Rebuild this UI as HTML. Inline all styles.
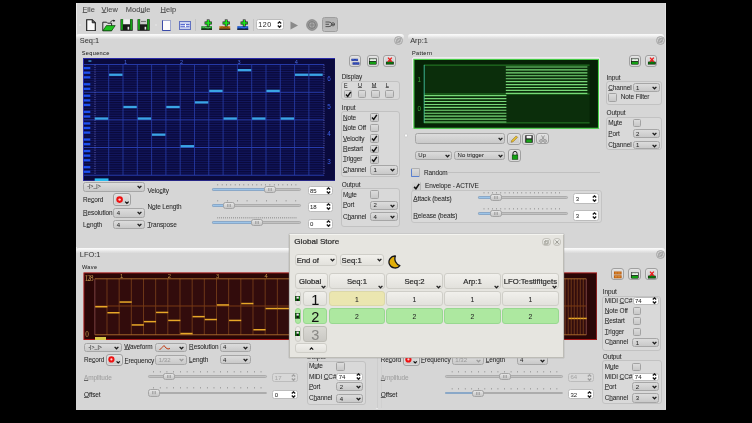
<!DOCTYPE html>
<html><head><meta charset="utf-8"><style>
html,body{margin:0;padding:0;width:752px;height:423px;overflow:hidden;background:#000;}
body{position:relative;will-change:transform;font-family:"Liberation Sans",sans-serif;}
div,span,svg{position:absolute;}
span{line-height:1;white-space:nowrap;}
u{text-decoration:underline;text-decoration-thickness:0.5px;text-underline-offset:0.45px;text-decoration-color:rgba(0,0,0,0.55);}
span{-webkit-text-stroke:0.04px currentColor;}
</style></head><body>
<div style="left:76px;top:3px;width:590px;height:406.6px;background:#d6d6d6;"></div>
<div style="left:76px;top:3px;width:1px;height:406px;background:#ececec;"></div>
<div style="left:76px;top:408.2px;width:590px;height:1.2px;background:#e8e8e8;"></div>
<div style="left:664.6px;top:3px;width:1px;height:406px;background:#e2e2e2;"></div>
<span style="left:82.6px;top:5.91px;font-size:7.4px;color:#4e4e4e;-webkit-text-stroke:0.1px #4e4e4e;letter-spacing:0.1px;"><u>F</u>ile</span>
<span style="left:101.6px;top:5.91px;font-size:7.4px;color:#4e4e4e;-webkit-text-stroke:0.1px #4e4e4e;letter-spacing:0.1px;"><u>V</u>iew</span>
<span style="left:125.7px;top:5.91px;font-size:7.4px;color:#4e4e4e;-webkit-text-stroke:0.1px #4e4e4e;letter-spacing:0.1px;">Mod<u>u</u>le</span>
<span style="left:160.5px;top:5.91px;font-size:7.4px;color:#4e4e4e;-webkit-text-stroke:0.1px #4e4e4e;letter-spacing:0.1px;"><u>H</u>elp</span>
<div style="left:76px;top:33.5px;width:327.5px;height:213px;background:linear-gradient(#fbfbfb 0px,#f2f2f2 1.8px,#e2e2e2 3.6px,#d6d6d6 5.5px);border-radius:3px 3px 0 0;box-sizing:border-box;"></div>
<span style="left:79.8px;top:36.61px;font-size:7.4px;color:#383838;">Seq:1</span>
<div style="left:394.0px;top:36.0px;width:9.0px;height:9.0px;border-radius:50%;background:radial-gradient(circle at 50% 40%,#dcdcdc,#c4c4c4);border:1px solid #a8a8a8;box-sizing:border-box;"></div>
<svg style="left:395.9px;top:37.9px" width="5.2" height="5.2"><rect x="0.6" y="1.8" width="2.8" height="2.8" fill="none" stroke="#9a9a9a" stroke-width="0.7"/><rect x="1.8" y="0.6" width="2.8" height="2.8" fill="none" stroke="#9a9a9a" stroke-width="0.7"/></svg>
<div style="left:408px;top:33.5px;width:256px;height:213px;background:linear-gradient(#fbfbfb 0px,#f2f2f2 1.8px,#e2e2e2 3.6px,#d6d6d6 5.5px);border-radius:3px 3px 0 0;box-sizing:border-box;"></div>
<span style="left:410.2px;top:36.61px;font-size:7.4px;color:#383838;">Arp:1</span>
<div style="left:656.0px;top:36.3px;width:9.0px;height:9.0px;border-radius:50%;background:radial-gradient(circle at 50% 40%,#dcdcdc,#c4c4c4);border:1px solid #a8a8a8;box-sizing:border-box;"></div>
<svg style="left:657.9px;top:38.2px" width="5.2" height="5.2"><rect x="0.6" y="1.8" width="2.8" height="2.8" fill="none" stroke="#9a9a9a" stroke-width="0.7"/><rect x="1.8" y="0.6" width="2.8" height="2.8" fill="none" stroke="#9a9a9a" stroke-width="0.7"/></svg>
<div style="left:76px;top:247.5px;width:300px;height:161px;background:linear-gradient(#fbfbfb 0px,#f2f2f2 1.8px,#e2e2e2 3.6px,#d6d6d6 5.5px);border-radius:3px 3px 0 0;box-sizing:border-box;"></div>
<span style="left:79.8px;top:250.61px;font-size:7.4px;color:#383838;">LFO:1</span>
<div style="left:378px;top:247.5px;width:287px;height:161px;background:linear-gradient(#fbfbfb 0px,#f2f2f2 1.8px,#e2e2e2 3.6px,#d6d6d6 5.5px);border-radius:3px 3px 0 0;box-sizing:border-box;"></div>
<span style="left:381.8px;top:250.61px;font-size:7.4px;color:#383838;">LFO:2</span>
<div style="left:655.8px;top:249.7px;width:9.0px;height:9.0px;border-radius:50%;background:radial-gradient(circle at 50% 40%,#dcdcdc,#c4c4c4);border:1px solid #a8a8a8;box-sizing:border-box;"></div>
<svg style="left:657.7px;top:251.6px" width="5.2" height="5.2"><rect x="0.6" y="1.8" width="2.8" height="2.8" fill="none" stroke="#9a9a9a" stroke-width="0.7"/><rect x="1.8" y="0.6" width="2.8" height="2.8" fill="none" stroke="#9a9a9a" stroke-width="0.7"/></svg>
<svg style="left:82.6px;top:57.8px" width="252.9" height="123.4" viewBox="82.6 57.8 252.9 123.4"><rect x="82.6" y="57.8" width="252.9" height="123.4" fill="#eef0f8"/><rect x="83.1" y="58.3" width="251.9" height="122.4" fill="#0a0a3c" stroke="#2a2aa8" stroke-width="1"/><line x1="83.5" x2="323.7" y1="64.4" y2="64.4" stroke="#2c44c0" stroke-width="0.9"/><line x1="83.5" x2="323.7" y1="66.7" y2="66.7" stroke="#1a2278" stroke-width="0.6"/><line x1="83.5" x2="323.7" y1="69.01" y2="69.01" stroke="#1a2278" stroke-width="0.6"/><line x1="83.5" x2="323.7" y1="71.31" y2="71.31" stroke="#1a2278" stroke-width="0.6"/><line x1="83.5" x2="323.7" y1="73.62" y2="73.62" stroke="#1a2278" stroke-width="0.6"/><line x1="83.5" x2="323.7" y1="75.92" y2="75.92" stroke="#1a2278" stroke-width="0.6"/><line x1="83.5" x2="323.7" y1="78.23" y2="78.23" stroke="#1a2278" stroke-width="0.6"/><line x1="83.5" x2="323.7" y1="80.53" y2="80.53" stroke="#1a2278" stroke-width="0.6"/><line x1="83.5" x2="323.7" y1="82.83" y2="82.83" stroke="#1a2278" stroke-width="0.6"/><line x1="83.5" x2="323.7" y1="85.14" y2="85.14" stroke="#1a2278" stroke-width="0.6"/><line x1="83.5" x2="323.7" y1="87.44" y2="87.44" stroke="#1a2278" stroke-width="0.6"/><line x1="83.5" x2="323.7" y1="89.75" y2="89.75" stroke="#1a2278" stroke-width="0.6"/><line x1="83.5" x2="323.7" y1="92.05" y2="92.05" stroke="#2c44c0" stroke-width="0.9"/><line x1="83.5" x2="323.7" y1="94.35" y2="94.35" stroke="#1a2278" stroke-width="0.6"/><line x1="83.5" x2="323.7" y1="96.66" y2="96.66" stroke="#1a2278" stroke-width="0.6"/><line x1="83.5" x2="323.7" y1="98.96" y2="98.96" stroke="#1a2278" stroke-width="0.6"/><line x1="83.5" x2="323.7" y1="101.27" y2="101.27" stroke="#1a2278" stroke-width="0.6"/><line x1="83.5" x2="323.7" y1="103.57" y2="103.57" stroke="#1a2278" stroke-width="0.6"/><line x1="83.5" x2="323.7" y1="105.88" y2="105.88" stroke="#1a2278" stroke-width="0.6"/><line x1="83.5" x2="323.7" y1="108.18" y2="108.18" stroke="#1a2278" stroke-width="0.6"/><line x1="83.5" x2="323.7" y1="110.48" y2="110.48" stroke="#1a2278" stroke-width="0.6"/><line x1="83.5" x2="323.7" y1="112.79" y2="112.79" stroke="#1a2278" stroke-width="0.6"/><line x1="83.5" x2="323.7" y1="115.09" y2="115.09" stroke="#1a2278" stroke-width="0.6"/><line x1="83.5" x2="323.7" y1="117.4" y2="117.4" stroke="#1a2278" stroke-width="0.6"/><line x1="83.5" x2="323.7" y1="119.7" y2="119.7" stroke="#2c44c0" stroke-width="0.9"/><line x1="83.5" x2="323.7" y1="122.0" y2="122.0" stroke="#1a2278" stroke-width="0.6"/><line x1="83.5" x2="323.7" y1="124.31" y2="124.31" stroke="#1a2278" stroke-width="0.6"/><line x1="83.5" x2="323.7" y1="126.61" y2="126.61" stroke="#1a2278" stroke-width="0.6"/><line x1="83.5" x2="323.7" y1="128.92" y2="128.92" stroke="#1a2278" stroke-width="0.6"/><line x1="83.5" x2="323.7" y1="131.22" y2="131.22" stroke="#1a2278" stroke-width="0.6"/><line x1="83.5" x2="323.7" y1="133.53" y2="133.53" stroke="#1a2278" stroke-width="0.6"/><line x1="83.5" x2="323.7" y1="135.83" y2="135.83" stroke="#1a2278" stroke-width="0.6"/><line x1="83.5" x2="323.7" y1="138.13" y2="138.13" stroke="#1a2278" stroke-width="0.6"/><line x1="83.5" x2="323.7" y1="140.44" y2="140.44" stroke="#1a2278" stroke-width="0.6"/><line x1="83.5" x2="323.7" y1="142.74" y2="142.74" stroke="#1a2278" stroke-width="0.6"/><line x1="83.5" x2="323.7" y1="145.05" y2="145.05" stroke="#1a2278" stroke-width="0.6"/><line x1="83.5" x2="323.7" y1="147.35" y2="147.35" stroke="#2c44c0" stroke-width="0.9"/><line x1="83.5" x2="323.7" y1="149.65" y2="149.65" stroke="#1a2278" stroke-width="0.6"/><line x1="83.5" x2="323.7" y1="151.96" y2="151.96" stroke="#1a2278" stroke-width="0.6"/><line x1="83.5" x2="323.7" y1="154.26" y2="154.26" stroke="#1a2278" stroke-width="0.6"/><line x1="83.5" x2="323.7" y1="156.57" y2="156.57" stroke="#1a2278" stroke-width="0.6"/><line x1="83.5" x2="323.7" y1="158.87" y2="158.87" stroke="#1a2278" stroke-width="0.6"/><line x1="83.5" x2="323.7" y1="161.18" y2="161.18" stroke="#1a2278" stroke-width="0.6"/><line x1="83.5" x2="323.7" y1="163.48" y2="163.48" stroke="#1a2278" stroke-width="0.6"/><line x1="83.5" x2="323.7" y1="165.78" y2="165.78" stroke="#1a2278" stroke-width="0.6"/><line x1="83.5" x2="323.7" y1="168.09" y2="168.09" stroke="#1a2278" stroke-width="0.6"/><line x1="83.5" x2="323.7" y1="170.39" y2="170.39" stroke="#1a2278" stroke-width="0.6"/><line x1="83.5" x2="323.7" y1="172.7" y2="172.7" stroke="#1a2278" stroke-width="0.6"/><line x1="83.5" x2="323.7" y1="175.0" y2="175.0" stroke="#2c44c0" stroke-width="0.9"/><rect x="83.3" y="66.8" width="6.6" height="2.2" fill="#1c50f0"/><rect x="83.3" y="71.41" width="6.6" height="2.2" fill="#1c50f0"/><rect x="83.3" y="76.02" width="6.6" height="2.2" fill="#1c50f0"/><rect x="83.3" y="82.93" width="6.6" height="2.2" fill="#1c50f0"/><rect x="83.3" y="87.54" width="6.6" height="2.2" fill="#1c50f0"/><rect x="83.3" y="94.45" width="6.6" height="2.2" fill="#1c50f0"/><rect x="83.3" y="99.06" width="6.6" height="2.2" fill="#1c50f0"/><rect x="83.3" y="103.67" width="6.6" height="2.2" fill="#1c50f0"/><rect x="83.3" y="110.58" width="6.6" height="2.2" fill="#1c50f0"/><rect x="83.3" y="115.19" width="6.6" height="2.2" fill="#1c50f0"/><rect x="83.3" y="122.1" width="6.6" height="2.2" fill="#1c50f0"/><rect x="83.3" y="126.71" width="6.6" height="2.2" fill="#1c50f0"/><rect x="83.3" y="131.32" width="6.6" height="2.2" fill="#1c50f0"/><rect x="83.3" y="138.23" width="6.6" height="2.2" fill="#1c50f0"/><rect x="83.3" y="142.84" width="6.6" height="2.2" fill="#1c50f0"/><rect x="83.3" y="149.75" width="6.6" height="2.2" fill="#1c50f0"/><rect x="83.3" y="154.36" width="6.6" height="2.2" fill="#1c50f0"/><rect x="83.3" y="158.97" width="6.6" height="2.2" fill="#1c50f0"/><rect x="83.3" y="165.88" width="6.6" height="2.2" fill="#1c50f0"/><rect x="83.3" y="170.49" width="6.6" height="2.2" fill="#1c50f0"/><line x1="108.3" x2="108.3" y1="64.4" y2="175.0" stroke="#2a40b0" stroke-width="0.75"/><line x1="122.6" x2="122.6" y1="64.4" y2="175.0" stroke="#2a40b0" stroke-width="0.75"/><line x1="136.9" x2="136.9" y1="64.4" y2="175.0" stroke="#2a40b0" stroke-width="0.75"/><line x1="151.2" x2="151.2" y1="64.4" y2="175.0" stroke="#2a40b0" stroke-width="0.75"/><line x1="165.5" x2="165.5" y1="64.4" y2="175.0" stroke="#2a40b0" stroke-width="0.75"/><line x1="179.8" x2="179.8" y1="64.4" y2="175.0" stroke="#2a40b0" stroke-width="0.75"/><line x1="194.1" x2="194.1" y1="64.4" y2="175.0" stroke="#2a40b0" stroke-width="0.75"/><line x1="208.4" x2="208.4" y1="64.4" y2="175.0" stroke="#2a40b0" stroke-width="0.75"/><line x1="222.7" x2="222.7" y1="64.4" y2="175.0" stroke="#2a40b0" stroke-width="0.75"/><line x1="237.0" x2="237.0" y1="64.4" y2="175.0" stroke="#2a40b0" stroke-width="0.75"/><line x1="251.3" x2="251.3" y1="64.4" y2="175.0" stroke="#2a40b0" stroke-width="0.75"/><line x1="265.6" x2="265.6" y1="64.4" y2="175.0" stroke="#2a40b0" stroke-width="0.75"/><line x1="279.9" x2="279.9" y1="64.4" y2="175.0" stroke="#2a40b0" stroke-width="0.75"/><line x1="294.2" x2="294.2" y1="64.4" y2="175.0" stroke="#2a40b0" stroke-width="0.75"/><line x1="308.5" x2="308.5" y1="64.4" y2="175.0" stroke="#2a40b0" stroke-width="0.75"/><line x1="94.6" x2="94.6" y1="64.4" y2="175.0" stroke="#7070c8" stroke-width="0.7" stroke-dasharray="1.2 1.1"/><line x1="323.6" x2="323.6" y1="64.4" y2="175.0" stroke="#7070c8" stroke-width="0.7" stroke-dasharray="1.2 1.1"/><rect x="94.4" y="117.2" width="13.4" height="2.3" fill="#3aa4e4"/><rect x="108.7" y="73.42" width="13.4" height="2.3" fill="#3aa4e4"/><rect x="123.0" y="105.67" width="13.4" height="2.3" fill="#3aa4e4"/><rect x="137.3" y="117.2" width="13.4" height="2.3" fill="#3aa4e4"/><rect x="151.6" y="133.33" width="13.4" height="2.3" fill="#3aa4e4"/><rect x="165.9" y="105.67" width="13.4" height="2.3" fill="#3aa4e4"/><rect x="180.2" y="144.85" width="13.4" height="2.3" fill="#3aa4e4"/><rect x="194.5" y="101.07" width="13.4" height="2.3" fill="#3aa4e4"/><rect x="208.8" y="89.55" width="13.4" height="2.3" fill="#3aa4e4"/><rect x="223.1" y="117.2" width="13.4" height="2.3" fill="#3aa4e4"/><rect x="237.4" y="68.81" width="13.4" height="2.3" fill="#3aa4e4"/><rect x="251.7" y="117.2" width="13.4" height="2.3" fill="#3aa4e4"/><rect x="266.0" y="89.55" width="13.4" height="2.3" fill="#3aa4e4"/><rect x="280.3" y="117.2" width="13.4" height="2.3" fill="#3aa4e4"/><rect x="294.6" y="73.42" width="13.4" height="2.3" fill="#3aa4e4"/><rect x="308.9" y="73.42" width="13.4" height="2.3" fill="#3aa4e4"/><rect x="88" y="60.2" width="3" height="1.3" fill="#40a8e8"/><text x="123.6" y="63.9" font-size="5.6" fill="#4a6ae0" font-family="Liberation Sans">1</text><text x="179.6" y="63.9" font-size="5.6" fill="#4a6ae0" font-family="Liberation Sans">2</text><text x="237.0" y="63.9" font-size="5.6" fill="#4a6ae0" font-family="Liberation Sans">3</text><text x="294.4" y="63.9" font-size="5.6" fill="#4a6ae0" font-family="Liberation Sans">4</text><text x="326.8" y="81.0" font-size="6.4" fill="#3c60e8" font-family="Liberation Sans">6</text><text x="326.8" y="108.7" font-size="6.4" fill="#3c60e8" font-family="Liberation Sans">5</text><text x="326.8" y="136.3" font-size="6.4" fill="#3c60e8" font-family="Liberation Sans">4</text><text x="326.8" y="163.6" font-size="6.4" fill="#3c60e8" font-family="Liberation Sans">3</text><rect x="94.3" y="178.2" width="13.8" height="2.9" fill="#28bcf0"/></svg>
<span style="left:81.7px;top:51.42px;font-size:5.6px;color:#262626;letter-spacing:0.35px;">Sequence</span>
<div style="left:404.6px;top:134.4px;width:2.4px;height:2.4px;border-radius:50%;background:#fafafa;box-shadow:0 0 0.8px #777;"></div>
<div style="left:348.9px;top:54.6px;width:12.3px;height:12px;box-sizing:border-box;border:1px solid #a0a0a0;border-radius:3px;background:linear-gradient(#e0e0e0,#cacaca);box-shadow:inset 0 0 0 0.5px #e8e8e8;"></div>
<svg style="left:350.7px;top:58.2px" width="9" height="7"><path d="M0.4 0.8 H7 V2.8 H0.4Z" fill="#0c1c90"/><path d="M1.6 4.4 H8.4 V6.6 H1.6Z" fill="#0c1c90"/><path d="M1 1.8 Q2 1 3 1.8 T5 1.8 T7 1.8 M2.2 5.5 Q3.2 4.7 4.2 5.5 T6.2 5.5 T8 5.5" fill="none" stroke="#5a8ae8" stroke-width="0.6"/></svg>
<div style="left:366.5px;top:54.6px;width:12.3px;height:12px;box-sizing:border-box;border:1px solid #a0a0a0;border-radius:3px;background:linear-gradient(#e0e0e0,#cacaca);box-shadow:inset 0 0 0 0.5px #e8e8e8;"></div>
<svg style="left:368.8px;top:57.8px" width="8" height="7"><rect x="0" y="0" width="7.6" height="6.6" rx="0.8" fill="#111"/><rect x="0.6" y="0.5" width="6.4" height="2.6" fill="#e8f0e8"/><path d="M1 1.2h1M2.6 1.2h1M4.2 1.2h1M5.8 1.2h0.8" stroke="#6a8a6a" stroke-width="0.5"/><rect x="0.6" y="3.8" width="6.4" height="2.4" fill="#12a012"/></svg>
<div style="left:383.3px;top:54.6px;width:12.3px;height:12px;box-sizing:border-box;border:1px solid #a0a0a0;border-radius:3px;background:linear-gradient(#e0e0e0,#cacaca);box-shadow:inset 0 0 0 0.5px #e8e8e8;"></div>
<svg style="left:385.6px;top:57.4px" width="8" height="8"><path d="M0 5 Q3.8 4 7.6 5 V7.2 H0Z" fill="#0a7a0a" stroke="#111" stroke-width="0.5"/><path d="M2 0.6 L5.8 4.8 M5.8 0.6 L2 4.8" stroke="#ee1818" stroke-width="1.3"/></svg>
<span style="left:341.7px;top:74.48px;font-size:6.45px;color:#262626;letter-spacing:-0.1px;">Display</span>
<div style="left:341.3px;top:81px;width:58.7px;height:18.5px;box-sizing:border-box;border:1px solid #c2c2c2;border-radius:3px;background:#d9d9d9;"></div>
<span style="left:344.0px;top:83.02px;font-size:5.6px;color:#262626;"><u>F</u></span>
<div style="left:343.6px;top:89.6px;width:8.5px;height:8.5px;box-sizing:border-box;border:1px solid #a2a2a2;border-radius:1.5px;background:linear-gradient(#dcdcdc,#c8c8c8);"></div>
<svg style="left:343.6px;top:89.6px" width="8.5" height="8.5" viewBox="0 0 8.5 8.5"><path d="M2 4.6 L3.7 6.4 L6.8 1.8" fill="none" stroke="#111" stroke-width="1.5"/></svg>
<span style="left:357.9px;top:83.02px;font-size:5.6px;color:#262626;"><u>U</u></span>
<div style="left:357.5px;top:89.6px;width:8.5px;height:8.5px;box-sizing:border-box;border:1px solid #a2a2a2;border-radius:1.5px;background:linear-gradient(#dcdcdc,#c8c8c8);"></div>
<span style="left:371.8px;top:83.02px;font-size:5.6px;color:#262626;"><u>M</u></span>
<div style="left:371.4px;top:89.6px;width:8.5px;height:8.5px;box-sizing:border-box;border:1px solid #a2a2a2;border-radius:1.5px;background:linear-gradient(#dcdcdc,#c8c8c8);"></div>
<span style="left:385.7px;top:83.02px;font-size:5.6px;color:#262626;"><u>L</u></span>
<div style="left:385.3px;top:89.6px;width:8.5px;height:8.5px;box-sizing:border-box;border:1px solid #a2a2a2;border-radius:1.5px;background:linear-gradient(#dcdcdc,#c8c8c8);"></div>
<span style="left:341.7px;top:104.98px;font-size:6.45px;color:#262626;letter-spacing:-0.1px;">Input</span>
<div style="left:341.3px;top:111.3px;width:58.7px;height:66px;box-sizing:border-box;border:1px solid #c2c2c2;border-radius:3px;background:#d9d9d9;"></div>
<span style="left:342.9px;top:114.88px;font-size:6.45px;color:#262626;letter-spacing:-0.1px;"><u>N</u>ote</span>
<div style="left:370.3px;top:113.4px;width:8.5px;height:8.5px;box-sizing:border-box;border:1px solid #a2a2a2;border-radius:1.5px;background:linear-gradient(#dcdcdc,#c8c8c8);"></div>
<svg style="left:370.3px;top:113.4px" width="8.5" height="8.5" viewBox="0 0 8.5 8.5"><path d="M2 4.6 L3.7 6.4 L6.8 1.8" fill="none" stroke="#111" stroke-width="1.5"/></svg>
<span style="left:342.9px;top:125.28px;font-size:6.45px;color:#262626;letter-spacing:-0.1px;"><u>N</u>ote Off</span>
<div style="left:370.3px;top:123.8px;width:8.5px;height:8.5px;box-sizing:border-box;border:1px solid #a2a2a2;border-radius:1.5px;background:linear-gradient(#dcdcdc,#c8c8c8);"></div>
<span style="left:342.9px;top:135.68px;font-size:6.45px;color:#262626;letter-spacing:-0.1px;"><u>V</u>elocity</span>
<div style="left:370.3px;top:134.2px;width:8.5px;height:8.5px;box-sizing:border-box;border:1px solid #a2a2a2;border-radius:1.5px;background:linear-gradient(#dcdcdc,#c8c8c8);"></div>
<svg style="left:370.3px;top:134.2px" width="8.5" height="8.5" viewBox="0 0 8.5 8.5"><path d="M2 4.6 L3.7 6.4 L6.8 1.8" fill="none" stroke="#111" stroke-width="1.5"/></svg>
<span style="left:342.9px;top:146.08px;font-size:6.45px;color:#262626;letter-spacing:-0.1px;"><u>R</u>estart</span>
<div style="left:370.3px;top:144.6px;width:8.5px;height:8.5px;box-sizing:border-box;border:1px solid #a2a2a2;border-radius:1.5px;background:linear-gradient(#dcdcdc,#c8c8c8);"></div>
<svg style="left:370.3px;top:144.6px" width="8.5" height="8.5" viewBox="0 0 8.5 8.5"><path d="M2 4.6 L3.7 6.4 L6.8 1.8" fill="none" stroke="#111" stroke-width="1.5"/></svg>
<span style="left:342.9px;top:156.48px;font-size:6.45px;color:#262626;letter-spacing:-0.1px;"><u>T</u>rigger</span>
<div style="left:370.3px;top:155.0px;width:8.5px;height:8.5px;box-sizing:border-box;border:1px solid #a2a2a2;border-radius:1.5px;background:linear-gradient(#dcdcdc,#c8c8c8);"></div>
<svg style="left:370.3px;top:155.0px" width="8.5" height="8.5" viewBox="0 0 8.5 8.5"><path d="M2 4.6 L3.7 6.4 L6.8 1.8" fill="none" stroke="#111" stroke-width="1.5"/></svg>
<span style="left:342.9px;top:167.48px;font-size:6.45px;color:#262626;letter-spacing:-0.1px;"><u>C</u>hannel</span>
<div style="left:370.2px;top:165.2px;width:27.4px;height:9.7px;box-sizing:border-box;border:1px solid #a6a6a6;border-radius:2.5px;background:linear-gradient(#dcdcdc,#c9c9c9);"></div>
<span style="left:373.6px;top:167.21px;font-size:6.0px;color:#262626;">1</span>
<svg style="left:389.8px;top:168.45px" width="5" height="4" viewBox="0 0 5 4"><path d="M0.6 0.9 L2.5 2.8 L4.4 0.9" fill="none" stroke="#1a1a1a" stroke-width="1.3"/></svg>
<span style="left:341.7px;top:181.68px;font-size:6.45px;color:#262626;letter-spacing:-0.1px;">Output</span>
<div style="left:341.3px;top:188px;width:58.7px;height:39px;box-sizing:border-box;border:1px solid #c2c2c2;border-radius:3px;background:#d9d9d9;"></div>
<span style="left:342.9px;top:191.68px;font-size:6.45px;color:#262626;letter-spacing:-0.1px;">M<u>u</u>te</span>
<div style="left:370.3px;top:190.2px;width:8.5px;height:8.5px;box-sizing:border-box;border:1px solid #a2a2a2;border-radius:1.5px;background:linear-gradient(#dcdcdc,#c8c8c8);"></div>
<span style="left:342.9px;top:202.48px;font-size:6.45px;color:#262626;letter-spacing:-0.1px;"><u>P</u>ort</span>
<div style="left:370.2px;top:200.6px;width:27.4px;height:9.3px;box-sizing:border-box;border:1px solid #a6a6a6;border-radius:2.5px;background:linear-gradient(#dcdcdc,#c9c9c9);"></div>
<span style="left:373.6px;top:202.41px;font-size:6.0px;color:#262626;">2</span>
<svg style="left:389.8px;top:203.65px" width="5" height="4" viewBox="0 0 5 4"><path d="M0.6 0.9 L2.5 2.8 L4.4 0.9" fill="none" stroke="#1a1a1a" stroke-width="1.3"/></svg>
<span style="left:342.9px;top:213.78px;font-size:6.45px;color:#262626;letter-spacing:-0.1px;">C<u>h</u>annel</span>
<div style="left:370.2px;top:212px;width:27.4px;height:9.4px;box-sizing:border-box;border:1px solid #a6a6a6;border-radius:2.5px;background:linear-gradient(#dcdcdc,#c9c9c9);"></div>
<span style="left:373.6px;top:213.86px;font-size:6.0px;color:#262626;">4</span>
<svg style="left:389.8px;top:215.1px" width="5" height="4" viewBox="0 0 5 4"><path d="M0.6 0.9 L2.5 2.8 L4.4 0.9" fill="none" stroke="#1a1a1a" stroke-width="1.3"/></svg>
<div style="left:83.3px;top:182.3px;width:61.4px;height:9.4px;box-sizing:border-box;border:1px solid #a6a6a6;border-radius:2.5px;background:linear-gradient(#dcdcdc,#c9c9c9);"></div>
<span style="left:87.3px;top:184.47px;font-size:5.2px;color:#262626;">-|&gt;_|&gt;</span>
<svg style="left:136.9px;top:185.4px" width="5" height="4" viewBox="0 0 5 4"><path d="M0.6 0.9 L2.5 2.8 L4.4 0.9" fill="none" stroke="#1a1a1a" stroke-width="1.3"/></svg>
<span style="left:147.4px;top:187.68px;font-size:6.45px;color:#262626;letter-spacing:-0.1px;">Velo<u>c</u>ity</span>
<span style="left:83px;top:197.48px;font-size:6.45px;color:#262626;letter-spacing:-0.1px;">Re<u>c</u>ord</span>
<div style="left:113.3px;top:193.3px;width:17.6px;height:12.9px;box-sizing:border-box;border:1px solid #a0a0a0;border-radius:3px;background:linear-gradient(#e0e0e0,#cacaca);box-shadow:inset 0 0 0 0.5px #e8e8e8;"></div>
<svg style="left:116.3px;top:195.8px" width="14" height="9"><circle cx="3.6" cy="3.6" r="3.3" fill="#ee1010"/><circle cx="3.6" cy="3.6" r="1.2" fill="#ffd0d0"/><path d="M9.2 5.6 L10.9 7.3 L12.6 5.6" fill="none" stroke="#111" stroke-width="1.2"/></svg>
<span style="left:147.4px;top:204.48px;font-size:6.45px;color:#262626;letter-spacing:-0.1px;">N<u>o</u>te Length</span>
<span style="left:83px;top:209.98px;font-size:6.45px;color:#262626;letter-spacing:-0.1px;"><u>R</u>esolution</span>
<div style="left:113.3px;top:208.2px;width:31.5px;height:9.4px;box-sizing:border-box;border:1px solid #a6a6a6;border-radius:2.5px;background:linear-gradient(#dcdcdc,#c9c9c9);"></div>
<span style="left:116.7px;top:210.06px;font-size:6.0px;color:#262626;">4</span>
<svg style="left:137.0px;top:211.3px" width="5" height="4" viewBox="0 0 5 4"><path d="M0.6 0.9 L2.5 2.8 L4.4 0.9" fill="none" stroke="#1a1a1a" stroke-width="1.3"/></svg>
<span style="left:83px;top:221.68px;font-size:6.45px;color:#262626;letter-spacing:-0.1px;">L<u>e</u>ngth</span>
<div style="left:113.3px;top:219.8px;width:31.5px;height:9.6px;box-sizing:border-box;border:1px solid #a6a6a6;border-radius:2.5px;background:linear-gradient(#dcdcdc,#c9c9c9);"></div>
<span style="left:116.7px;top:221.76px;font-size:6.0px;color:#262626;">4</span>
<svg style="left:137.0px;top:223.0px" width="5" height="4" viewBox="0 0 5 4"><path d="M0.6 0.9 L2.5 2.8 L4.4 0.9" fill="none" stroke="#1a1a1a" stroke-width="1.3"/></svg>
<span style="left:147.4px;top:221.68px;font-size:6.45px;color:#262626;letter-spacing:-0.1px;"><u>T</u>ranspose</span>
<div style="left:212.2px;top:187.8px;width:89.2px;height:2.8px;box-sizing:border-box;border:1px solid #acacac;border-radius:1.4px;background:#c2c2c2;"></div>
<div style="left:212.2px;top:187.8px;width:59.8px;height:2.8px;box-sizing:border-box;border:1px solid #8aa8c8;border-radius:1.4px;background:#9cc4e8;"></div>
<svg style="left:210.2px;top:183.6px" width="93.2" height="2"><rect x="7.5" y="0" width="0.6" height="1.5" fill="#808080"/><rect x="11.84" y="0" width="0.6" height="1.5" fill="#808080"/><rect x="16.18" y="0" width="0.6" height="1.5" fill="#808080"/><rect x="20.52" y="0" width="0.6" height="1.5" fill="#808080"/><rect x="24.86" y="0" width="0.6" height="1.5" fill="#808080"/><rect x="29.2" y="0" width="0.6" height="1.5" fill="#808080"/><rect x="33.54" y="0" width="0.6" height="1.5" fill="#808080"/><rect x="37.88" y="0" width="0.6" height="1.5" fill="#808080"/><rect x="42.22" y="0" width="0.6" height="1.5" fill="#808080"/><rect x="46.56" y="0" width="0.6" height="1.5" fill="#808080"/><rect x="50.9" y="0" width="0.6" height="1.5" fill="#808080"/><rect x="55.24" y="0" width="0.6" height="1.5" fill="#808080"/><rect x="59.58" y="0" width="0.6" height="1.5" fill="#808080"/><rect x="63.92" y="0" width="0.6" height="1.5" fill="#808080"/><rect x="68.26" y="0" width="0.6" height="1.5" fill="#808080"/><rect x="72.6" y="0" width="0.6" height="1.5" fill="#808080"/><rect x="76.94" y="0" width="0.6" height="1.5" fill="#808080"/><rect x="81.28" y="0" width="0.6" height="1.5" fill="#808080"/><rect x="85.62" y="0" width="0.6" height="1.5" fill="#808080"/></svg>
<div style="left:264px;top:185.6px;width:12px;height:7.2px;box-sizing:border-box;border:1px solid #a4a4a4;border-radius:2.5px;background:linear-gradient(#e4e4e4,#c6c6c6);"></div>
<svg style="left:268px;top:187.6px" width="4" height="3.2"><path d="M0.5 0V3.2M2 0V3.2M3.5 0V3.2" stroke="#8a8a8a" stroke-width="0.6"/></svg>
<div style="left:307.5px;top:185.5px;width:25.8px;height:9.8px;box-sizing:border-box;border:1px solid #bcbcbc;border-radius:2.5px;background:#ffffff;"></div>
<span style="left:309.9px;top:187.56px;font-size:6.0px;color:#2a2a2a;">85</span>
<svg style="left:326.3px;top:186.8px" width="5" height="7.2" viewBox="0 0 5 7.2"><path d="M0.8 2.6 L2.5 0.9 L4.2 2.6 M0.8 4.6 L2.5 6.3 L4.2 4.6" fill="none" stroke="#1a1a1a" stroke-width="1.35"/></svg>
<div style="left:212.2px;top:204.3px;width:89.2px;height:2.8px;box-sizing:border-box;border:1px solid #acacac;border-radius:1.4px;background:#c2c2c2;"></div>
<div style="left:212.2px;top:204.3px;width:19.0px;height:2.8px;box-sizing:border-box;border:1px solid #8aa8c8;border-radius:1.4px;background:#9cc4e8;"></div>
<svg style="left:210.2px;top:200.1px" width="93.2" height="2"><rect x="7.5" y="0" width="0.6" height="1.5" fill="#808080"/><rect x="17.25" y="0" width="0.6" height="1.5" fill="#808080"/><rect x="27.0" y="0" width="0.6" height="1.5" fill="#808080"/><rect x="36.75" y="0" width="0.6" height="1.5" fill="#808080"/><rect x="46.5" y="0" width="0.6" height="1.5" fill="#808080"/><rect x="56.25" y="0" width="0.6" height="1.5" fill="#808080"/><rect x="66.0" y="0" width="0.6" height="1.5" fill="#808080"/><rect x="75.75" y="0" width="0.6" height="1.5" fill="#808080"/><rect x="85.5" y="0" width="0.6" height="1.5" fill="#808080"/></svg>
<div style="left:223.2px;top:202.1px;width:12px;height:7.2px;box-sizing:border-box;border:1px solid #a4a4a4;border-radius:2.5px;background:linear-gradient(#e4e4e4,#c6c6c6);"></div>
<svg style="left:227.2px;top:204.1px" width="4" height="3.2"><path d="M0.5 0V3.2M2 0V3.2M3.5 0V3.2" stroke="#8a8a8a" stroke-width="0.6"/></svg>
<div style="left:307.5px;top:202.0px;width:25.8px;height:9.9px;box-sizing:border-box;border:1px solid #bcbcbc;border-radius:2.5px;background:#ffffff;"></div>
<span style="left:309.9px;top:204.11px;font-size:6.0px;color:#2a2a2a;">18</span>
<svg style="left:326.3px;top:203.35px" width="5" height="7.2" viewBox="0 0 5 7.2"><path d="M0.8 2.6 L2.5 0.9 L4.2 2.6 M0.8 4.6 L2.5 6.3 L4.2 4.6" fill="none" stroke="#1a1a1a" stroke-width="1.35"/></svg>
<div style="left:212.2px;top:221.1px;width:89.2px;height:2.8px;box-sizing:border-box;border:1px solid #acacac;border-radius:1.4px;background:#c2c2c2;"></div>
<div style="left:212.2px;top:221.1px;width:46.3px;height:2.8px;box-sizing:border-box;border:1px solid #8aa8c8;border-radius:1.4px;background:#9cc4e8;"></div>
<svg style="left:210.2px;top:216.9px" width="93.2" height="2"><rect x="7.5" y="0" width="0.6" height="1.5" fill="#808080"/><rect x="9.46" y="0" width="0.6" height="1.5" fill="#808080"/><rect x="11.41" y="0" width="0.6" height="1.5" fill="#808080"/><rect x="13.37" y="0" width="0.6" height="1.5" fill="#808080"/><rect x="15.32" y="0" width="0.6" height="1.5" fill="#808080"/><rect x="17.28" y="0" width="0.6" height="1.5" fill="#808080"/><rect x="19.23" y="0" width="0.6" height="1.5" fill="#808080"/><rect x="21.19" y="0" width="0.6" height="1.5" fill="#808080"/><rect x="23.14" y="0" width="0.6" height="1.5" fill="#808080"/><rect x="25.09" y="0" width="0.6" height="1.5" fill="#808080"/><rect x="27.05" y="0" width="0.6" height="1.5" fill="#808080"/><rect x="29.0" y="0" width="0.6" height="1.5" fill="#808080"/><rect x="30.96" y="0" width="0.6" height="1.5" fill="#808080"/><rect x="32.91" y="0" width="0.6" height="1.5" fill="#808080"/><rect x="34.87" y="0" width="0.6" height="1.5" fill="#808080"/><rect x="36.82" y="0" width="0.6" height="1.5" fill="#808080"/><rect x="38.78" y="0" width="0.6" height="1.5" fill="#808080"/><rect x="40.74" y="0" width="0.6" height="1.5" fill="#808080"/><rect x="42.69" y="0" width="0.6" height="1.5" fill="#808080"/><rect x="44.65" y="0" width="0.6" height="1.5" fill="#808080"/><rect x="46.6" y="0" width="0.6" height="1.5" fill="#808080"/><rect x="48.56" y="0" width="0.6" height="1.5" fill="#808080"/><rect x="50.51" y="0" width="0.6" height="1.5" fill="#808080"/><rect x="52.46" y="0" width="0.6" height="1.5" fill="#808080"/><rect x="54.42" y="0" width="0.6" height="1.5" fill="#808080"/><rect x="56.38" y="0" width="0.6" height="1.5" fill="#808080"/><rect x="58.33" y="0" width="0.6" height="1.5" fill="#808080"/><rect x="60.29" y="0" width="0.6" height="1.5" fill="#808080"/><rect x="62.24" y="0" width="0.6" height="1.5" fill="#808080"/><rect x="64.19" y="0" width="0.6" height="1.5" fill="#808080"/><rect x="66.15" y="0" width="0.6" height="1.5" fill="#808080"/><rect x="68.11" y="0" width="0.6" height="1.5" fill="#808080"/><rect x="70.06" y="0" width="0.6" height="1.5" fill="#808080"/><rect x="72.01" y="0" width="0.6" height="1.5" fill="#808080"/><rect x="73.97" y="0" width="0.6" height="1.5" fill="#808080"/><rect x="75.93" y="0" width="0.6" height="1.5" fill="#808080"/><rect x="77.88" y="0" width="0.6" height="1.5" fill="#808080"/><rect x="79.83" y="0" width="0.6" height="1.5" fill="#808080"/><rect x="81.79" y="0" width="0.6" height="1.5" fill="#808080"/><rect x="83.75" y="0" width="0.6" height="1.5" fill="#808080"/><rect x="85.7" y="0" width="0.6" height="1.5" fill="#808080"/></svg>
<div style="left:250.5px;top:218.9px;width:12px;height:7.2px;box-sizing:border-box;border:1px solid #a4a4a4;border-radius:2.5px;background:linear-gradient(#e4e4e4,#c6c6c6);"></div>
<svg style="left:254.5px;top:220.9px" width="4" height="3.2"><path d="M0.5 0V3.2M2 0V3.2M3.5 0V3.2" stroke="#8a8a8a" stroke-width="0.6"/></svg>
<div style="left:307.5px;top:218.8px;width:25.8px;height:10.2px;box-sizing:border-box;border:1px solid #bcbcbc;border-radius:2.5px;background:#ffffff;"></div>
<span style="left:309.9px;top:221.06px;font-size:6.0px;color:#2a2a2a;">0</span>
<svg style="left:326.3px;top:220.3px" width="5" height="7.2" viewBox="0 0 5 7.2"><path d="M0.8 2.6 L2.5 0.9 L4.2 2.6 M0.8 4.6 L2.5 6.3 L4.2 4.6" fill="none" stroke="#1a1a1a" stroke-width="1.35"/></svg>
<svg style="left:412.4px;top:57.4px" width="187.6" height="71.9" viewBox="412.4 57.4 187.6 71.9"><rect x="411.9" y="56.9" width="189.1" height="72.9" rx="2" fill="#f0eaf0" stroke="#c2c2c2" stroke-width="1"/><rect x="414.29999999999995" y="59.8" width="184.6" height="68.9" fill="#062206" stroke="#46d046" stroke-width="1.1"/><rect x="424.3" y="65.3" width="165.8" height="58" fill="#0b2e0b"/><line x1="424.3" x2="590" y1="65.5" y2="65.5" stroke="#2a8a2a" stroke-width="0.9"/><line x1="424.3" x2="590" y1="94.4" y2="94.4" stroke="#2a8a2a" stroke-width="0.9"/><line x1="424.3" x2="590" y1="123.3" y2="123.3" stroke="#2a8a2a" stroke-width="0.9"/><line x1="424.6" x2="424.6" y1="65.3" y2="123.3" stroke="#40c0a0" stroke-width="0.9"/><line x1="506.2" x2="587.8" y1="67.4" y2="67.4" stroke="#78d878" stroke-width="1.15"/><line x1="506.2" x2="587.8" y1="70.33" y2="70.33" stroke="#78d878" stroke-width="1.15"/><line x1="506.2" x2="587.8" y1="73.26" y2="73.26" stroke="#78d878" stroke-width="1.15"/><line x1="506.2" x2="587.8" y1="76.19" y2="76.19" stroke="#78d878" stroke-width="1.15"/><line x1="506.2" x2="587.8" y1="79.12" y2="79.12" stroke="#78d878" stroke-width="1.15"/><line x1="506.2" x2="587.8" y1="82.05" y2="82.05" stroke="#78d878" stroke-width="1.15"/><line x1="506.2" x2="587.8" y1="84.98" y2="84.98" stroke="#78d878" stroke-width="1.15"/><line x1="506.2" x2="587.8" y1="87.91" y2="87.91" stroke="#78d878" stroke-width="1.15"/><line x1="506.2" x2="587.8" y1="90.84" y2="90.84" stroke="#78d878" stroke-width="1.15"/><line x1="506.2" x2="587.8" y1="93.77" y2="93.77" stroke="#78d878" stroke-width="1.15"/><line x1="424.6" x2="506.8" y1="96.1" y2="96.1" stroke="#78d878" stroke-width="1.15"/><line x1="424.6" x2="506.8" y1="99.02" y2="99.02" stroke="#78d878" stroke-width="1.15"/><line x1="424.6" x2="506.8" y1="101.94" y2="101.94" stroke="#78d878" stroke-width="1.15"/><line x1="424.6" x2="506.8" y1="104.86" y2="104.86" stroke="#78d878" stroke-width="1.15"/><line x1="424.6" x2="506.8" y1="107.78" y2="107.78" stroke="#78d878" stroke-width="1.15"/><line x1="424.6" x2="506.8" y1="110.7" y2="110.7" stroke="#78d878" stroke-width="1.15"/><line x1="424.6" x2="506.8" y1="113.62" y2="113.62" stroke="#78d878" stroke-width="1.15"/><line x1="424.6" x2="506.8" y1="116.54" y2="116.54" stroke="#78d878" stroke-width="1.15"/><line x1="424.6" x2="506.8" y1="119.46" y2="119.46" stroke="#78d878" stroke-width="1.15"/><line x1="424.6" x2="506.8" y1="122.38" y2="122.38" stroke="#78d878" stroke-width="1.15"/><text x="417.8" y="82.2" font-size="6.3" fill="#38a038" font-family="Liberation Sans">1</text><text x="417.8" y="111.5" font-size="6.3" fill="#38a038" font-family="Liberation Sans">0</text></svg>
<span style="left:412px;top:51.12px;font-size:5.6px;color:#262626;letter-spacing:0.35px;">Pattern</span>
<div style="left:628.8px;top:54.6px;width:12.3px;height:12px;box-sizing:border-box;border:1px solid #a0a0a0;border-radius:3px;background:linear-gradient(#e0e0e0,#cacaca);box-shadow:inset 0 0 0 0.5px #e8e8e8;"></div>
<svg style="left:631.1px;top:57.8px" width="8" height="7"><rect x="0" y="0" width="7.6" height="6.6" rx="0.8" fill="#111"/><rect x="0.6" y="0.5" width="6.4" height="2.6" fill="#e8f0e8"/><path d="M1 1.2h1M2.6 1.2h1M4.2 1.2h1M5.8 1.2h0.8" stroke="#6a8a6a" stroke-width="0.5"/><rect x="0.6" y="3.8" width="6.4" height="2.4" fill="#12a012"/></svg>
<div style="left:645.2px;top:54.6px;width:12.3px;height:12px;box-sizing:border-box;border:1px solid #a0a0a0;border-radius:3px;background:linear-gradient(#e0e0e0,#cacaca);box-shadow:inset 0 0 0 0.5px #e8e8e8;"></div>
<svg style="left:647.5px;top:57.4px" width="8" height="8"><path d="M0 5 Q3.8 4 7.6 5 V7.2 H0Z" fill="#0a7a0a" stroke="#111" stroke-width="0.5"/><path d="M2 0.6 L5.8 4.8 M5.8 0.6 L2 4.8" stroke="#ee1818" stroke-width="1.3"/></svg>
<span style="left:606.6px;top:74.78px;font-size:6.45px;color:#262626;letter-spacing:-0.1px;">Input</span>
<div style="left:606px;top:81px;width:56px;height:23.7px;box-sizing:border-box;border:1px solid #c2c2c2;border-radius:3px;background:#d9d9d9;"></div>
<span style="left:608.3px;top:84.98px;font-size:6.45px;color:#262626;letter-spacing:-0.1px;"><u>C</u>hannel</span>
<div style="left:632.6px;top:83px;width:27px;height:9.4px;box-sizing:border-box;border:1px solid #a6a6a6;border-radius:2.5px;background:linear-gradient(#dcdcdc,#c9c9c9);"></div>
<span style="left:636.0px;top:84.86px;font-size:6.0px;color:#262626;">1</span>
<svg style="left:651.8px;top:86.1px" width="5" height="4" viewBox="0 0 5 4"><path d="M0.6 0.9 L2.5 2.8 L4.4 0.9" fill="none" stroke="#1a1a1a" stroke-width="1.3"/></svg>
<div style="left:608.3px;top:93.4px;width:8.5px;height:8.5px;box-sizing:border-box;border:1px solid #a2a2a2;border-radius:1.5px;background:linear-gradient(#dcdcdc,#c8c8c8);"></div>
<span style="left:620.8px;top:94.48px;font-size:6.45px;color:#262626;letter-spacing:-0.1px;">Note Filter</span>
<span style="left:606.6px;top:110.18px;font-size:6.45px;color:#262626;letter-spacing:-0.1px;">Output</span>
<div style="left:606px;top:117px;width:56px;height:33.3px;box-sizing:border-box;border:1px solid #c2c2c2;border-radius:3px;background:#d9d9d9;"></div>
<span style="left:608.3px;top:120.28px;font-size:6.45px;color:#262626;letter-spacing:-0.1px;">M<u>u</u>te</span>
<div style="left:632.6px;top:118.9px;width:8.5px;height:8.5px;box-sizing:border-box;border:1px solid #a2a2a2;border-radius:1.5px;background:linear-gradient(#dcdcdc,#c8c8c8);"></div>
<span style="left:608.3px;top:131.28px;font-size:6.45px;color:#262626;letter-spacing:-0.1px;"><u>P</u>ort</span>
<div style="left:632.6px;top:129.3px;width:27px;height:8.6px;box-sizing:border-box;border:1px solid #a6a6a6;border-radius:2.5px;background:linear-gradient(#dcdcdc,#c9c9c9);"></div>
<span style="left:636.0px;top:130.76px;font-size:6.0px;color:#262626;">2</span>
<svg style="left:651.8px;top:132.0px" width="5" height="4" viewBox="0 0 5 4"><path d="M0.6 0.9 L2.5 2.8 L4.4 0.9" fill="none" stroke="#1a1a1a" stroke-width="1.3"/></svg>
<span style="left:608.3px;top:142.48px;font-size:6.45px;color:#262626;letter-spacing:-0.1px;">C<u>h</u>annel</span>
<div style="left:632.6px;top:140.7px;width:27px;height:8.8px;box-sizing:border-box;border:1px solid #a6a6a6;border-radius:2.5px;background:linear-gradient(#dcdcdc,#c9c9c9);"></div>
<span style="left:636.0px;top:142.26px;font-size:6.0px;color:#262626;">1</span>
<svg style="left:651.8px;top:143.5px" width="5" height="4" viewBox="0 0 5 4"><path d="M0.6 0.9 L2.5 2.8 L4.4 0.9" fill="none" stroke="#1a1a1a" stroke-width="1.3"/></svg>
<div style="left:414.9px;top:133.3px;width:90.6px;height:10.6px;box-sizing:border-box;border:1px solid #a6a6a6;border-radius:2.5px;background:linear-gradient(#dcdcdc,#c9c9c9);"></div>
<svg style="left:497.7px;top:137.0px" width="5" height="4" viewBox="0 0 5 4"><path d="M0.6 0.9 L2.5 2.8 L4.4 0.9" fill="none" stroke="#1a1a1a" stroke-width="1.3"/></svg>
<div style="left:507.4px;top:132.6px;width:13.4px;height:12.5px;box-sizing:border-box;border:1px solid #a0a0a0;border-radius:3px;background:linear-gradient(#e0e0e0,#cacaca);box-shadow:inset 0 0 0 0.5px #e8e8e8;"></div>
<svg style="left:510px;top:134.8px" width="8.5" height="8.5"><path d="M1.2 7.3 L1.7 5.4 L6.2 0.9 L7.6 2.3 L3.1 6.8Z" fill="#e8c030" stroke="#806010" stroke-width="0.5"/></svg>
<div style="left:522.4px;top:132.8px;width:12.5px;height:12.2px;box-sizing:border-box;border:1px solid #a0a0a0;border-radius:3px;background:linear-gradient(#e0e0e0,#cacaca);box-shadow:inset 0 0 0 0.5px #e8e8e8;"></div>
<svg style="left:524.8px;top:135px" width="8" height="8"><rect x="0.3" y="0.3" width="7.4" height="7.4" fill="#111"/><rect x="1.5" y="0.8" width="5" height="2.6" fill="#f4f4f4"/><rect x="1.2" y="4.4" width="5.6" height="3" fill="#1aa01a"/></svg>
<div style="left:536.4px;top:132.8px;width:12.6px;height:11.6px;box-sizing:border-box;border:1px solid #a0a0a0;border-radius:3px;background:linear-gradient(#e0e0e0,#cacaca);box-shadow:inset 0 0 0 0.5px #e8e8e8;"></div>
<svg style="left:539px;top:134.8px" width="8" height="8"><circle cx="2" cy="6" r="1.4" fill="none" stroke="#8a8a8a" stroke-width="0.8"/><circle cx="6" cy="6" r="1.4" fill="none" stroke="#8a8a8a" stroke-width="0.8"/><path d="M2.8 4.8 L5.5 0.5 M5.2 4.8 L2.5 0.5" stroke="#8a8a8a" stroke-width="0.8"/></svg>
<div style="left:414.9px;top:150.5px;width:37.4px;height:9.4px;box-sizing:border-box;border:1px solid #a6a6a6;border-radius:2.5px;background:linear-gradient(#dcdcdc,#c9c9c9);"></div>
<span style="left:418.3px;top:152.36px;font-size:6.0px;color:#262626;">Up</span>
<svg style="left:444.5px;top:153.6px" width="5" height="4" viewBox="0 0 5 4"><path d="M0.6 0.9 L2.5 2.8 L4.4 0.9" fill="none" stroke="#1a1a1a" stroke-width="1.3"/></svg>
<div style="left:454.2px;top:150.5px;width:51.3px;height:9.4px;box-sizing:border-box;border:1px solid #a6a6a6;border-radius:2.5px;background:linear-gradient(#dcdcdc,#c9c9c9);"></div>
<span style="left:457.6px;top:152.36px;font-size:6.0px;color:#262626;">No trigger</span>
<svg style="left:497.7px;top:153.6px" width="5" height="4" viewBox="0 0 5 4"><path d="M0.6 0.9 L2.5 2.8 L4.4 0.9" fill="none" stroke="#1a1a1a" stroke-width="1.3"/></svg>
<div style="left:508.3px;top:148.6px;width:12.5px;height:13px;box-sizing:border-box;border:1px solid #a0a0a0;border-radius:3px;background:linear-gradient(#e0e0e0,#cacaca);box-shadow:inset 0 0 0 0.5px #e8e8e8;"></div>
<svg style="left:510.8px;top:150.6px" width="8" height="9"><path d="M2 4 V2.4 A2 2 0 0 1 6 2.4 V4" fill="none" stroke="#222" stroke-width="1"/><rect x="1.2" y="4" width="5.6" height="4.4" fill="#12a012" stroke="#063006" stroke-width="0.5"/></svg>
<div style="left:411px;top:167.6px;width:9.4px;height:9.4px;box-sizing:border-box;border:1px solid #b0b0b0;border-left:1.3px solid #5a80d0;border-bottom:1.3px solid #5a80d0;border-radius:1.5px;background:linear-gradient(#dadada,#c8c8c8);"></div>
<span style="left:423.9px;top:169.88px;font-size:6.45px;color:#262626;letter-spacing:-0.1px;">Random</span>
<div style="left:447.6px;top:171.6px;width:152px;height:1px;background:#c0c0c0;"></div>
<div style="left:411.6px;top:181.5px;width:9px;height:9px;box-sizing:border-box;border-right:1px solid #b8b8b8;border-bottom:1px solid #b8b8b8;border-radius:1.5px;background:linear-gradient(#d4d4d4,#cbcbcb);"></div>
<svg style="left:411.6px;top:181.5px" width="9" height="9" viewBox="0 0 8.5 8.5"><path d="M2 4.6 L3.7 6.4 L6.8 1.8" fill="none" stroke="#111" stroke-width="1.5"/></svg>
<span style="left:425px;top:182.98px;font-size:6.45px;color:#262626;letter-spacing:-0.1px;">Envelope - ACTIVE</span>
<div style="left:410.8px;top:189.6px;width:191.6px;height:33px;box-sizing:border-box;border:1px solid #c4c4c4;border-radius:3px;background:#d9d9d9;"></div>
<span style="left:413.3px;top:196.08px;font-size:6.45px;color:#262626;letter-spacing:-0.1px;"><u>A</u>ttack (beats)</span>
<span style="left:413.3px;top:212.68px;font-size:6.45px;color:#262626;letter-spacing:-0.1px;"><u>R</u>elease (beats)</span>
<div style="left:478.3px;top:195.8px;width:89.3px;height:2.8px;box-sizing:border-box;border:1px solid #acacac;border-radius:1.4px;background:#c2c2c2;"></div>
<div style="left:478.3px;top:195.8px;width:19.2px;height:2.8px;box-sizing:border-box;border:1px solid #8aa8c8;border-radius:1.4px;background:#9cc4e8;"></div>
<svg style="left:476.3px;top:191.6px" width="93.3" height="2"><rect x="7.7" y="0" width="0.6" height="1.5" fill="#808080"/><rect x="11.9" y="0" width="0.6" height="1.5" fill="#808080"/><rect x="16.1" y="0" width="0.6" height="1.5" fill="#808080"/><rect x="20.3" y="0" width="0.6" height="1.5" fill="#808080"/><rect x="24.5" y="0" width="0.6" height="1.5" fill="#808080"/><rect x="28.7" y="0" width="0.6" height="1.5" fill="#808080"/><rect x="32.9" y="0" width="0.6" height="1.5" fill="#808080"/><rect x="37.1" y="0" width="0.6" height="1.5" fill="#808080"/><rect x="41.3" y="0" width="0.6" height="1.5" fill="#808080"/><rect x="45.5" y="0" width="0.6" height="1.5" fill="#808080"/><rect x="49.7" y="0" width="0.6" height="1.5" fill="#808080"/><rect x="53.9" y="0" width="0.6" height="1.5" fill="#808080"/><rect x="58.1" y="0" width="0.6" height="1.5" fill="#808080"/><rect x="62.3" y="0" width="0.6" height="1.5" fill="#808080"/><rect x="66.5" y="0" width="0.6" height="1.5" fill="#808080"/><rect x="70.7" y="0" width="0.6" height="1.5" fill="#808080"/><rect x="74.9" y="0" width="0.6" height="1.5" fill="#808080"/><rect x="79.1" y="0" width="0.6" height="1.5" fill="#808080"/><rect x="83.3" y="0" width="0.6" height="1.5" fill="#808080"/></svg>
<div style="left:489.5px;top:193.6px;width:12px;height:7.2px;box-sizing:border-box;border:1px solid #a4a4a4;border-radius:2.5px;background:linear-gradient(#e4e4e4,#c6c6c6);"></div>
<svg style="left:493.5px;top:195.6px" width="4" height="3.2"><path d="M0.5 0V3.2M2 0V3.2M3.5 0V3.2" stroke="#8a8a8a" stroke-width="0.6"/></svg>
<div style="left:573.3px;top:193px;width:26.1px;height:10.8px;box-sizing:border-box;border:1px solid #bcbcbc;border-radius:2.5px;background:#ffffff;"></div>
<span style="left:575.7px;top:195.56px;font-size:6.0px;color:#2a2a2a;">3</span>
<svg style="left:592.4px;top:194.8px" width="5" height="7.2" viewBox="0 0 5 7.2"><path d="M0.8 2.6 L2.5 0.9 L4.2 2.6 M0.8 4.6 L2.5 6.3 L4.2 4.6" fill="none" stroke="#1a1a1a" stroke-width="1.35"/></svg>
<div style="left:478.3px;top:212.2px;width:89.3px;height:2.8px;box-sizing:border-box;border:1px solid #acacac;border-radius:1.4px;background:#c2c2c2;"></div>
<div style="left:478.3px;top:212.2px;width:19.2px;height:2.8px;box-sizing:border-box;border:1px solid #8aa8c8;border-radius:1.4px;background:#9cc4e8;"></div>
<svg style="left:476.3px;top:208.0px" width="93.3" height="2"><rect x="7.7" y="0" width="0.6" height="1.5" fill="#808080"/><rect x="11.9" y="0" width="0.6" height="1.5" fill="#808080"/><rect x="16.1" y="0" width="0.6" height="1.5" fill="#808080"/><rect x="20.3" y="0" width="0.6" height="1.5" fill="#808080"/><rect x="24.5" y="0" width="0.6" height="1.5" fill="#808080"/><rect x="28.7" y="0" width="0.6" height="1.5" fill="#808080"/><rect x="32.9" y="0" width="0.6" height="1.5" fill="#808080"/><rect x="37.1" y="0" width="0.6" height="1.5" fill="#808080"/><rect x="41.3" y="0" width="0.6" height="1.5" fill="#808080"/><rect x="45.5" y="0" width="0.6" height="1.5" fill="#808080"/><rect x="49.7" y="0" width="0.6" height="1.5" fill="#808080"/><rect x="53.9" y="0" width="0.6" height="1.5" fill="#808080"/><rect x="58.1" y="0" width="0.6" height="1.5" fill="#808080"/><rect x="62.3" y="0" width="0.6" height="1.5" fill="#808080"/><rect x="66.5" y="0" width="0.6" height="1.5" fill="#808080"/><rect x="70.7" y="0" width="0.6" height="1.5" fill="#808080"/><rect x="74.9" y="0" width="0.6" height="1.5" fill="#808080"/><rect x="79.1" y="0" width="0.6" height="1.5" fill="#808080"/><rect x="83.3" y="0" width="0.6" height="1.5" fill="#808080"/></svg>
<div style="left:489.5px;top:210.0px;width:12px;height:7.2px;box-sizing:border-box;border:1px solid #a4a4a4;border-radius:2.5px;background:linear-gradient(#e4e4e4,#c6c6c6);"></div>
<svg style="left:493.5px;top:212.0px" width="4" height="3.2"><path d="M0.5 0V3.2M2 0V3.2M3.5 0V3.2" stroke="#8a8a8a" stroke-width="0.6"/></svg>
<div style="left:573.3px;top:210px;width:26.1px;height:10.8px;box-sizing:border-box;border:1px solid #bcbcbc;border-radius:2.5px;background:#ffffff;"></div>
<span style="left:575.7px;top:212.56px;font-size:6.0px;color:#2a2a2a;">3</span>
<svg style="left:592.4px;top:211.8px" width="5" height="7.2" viewBox="0 0 5 7.2"><path d="M0.8 2.6 L2.5 0.9 L4.2 2.6 M0.8 4.6 L2.5 6.3 L4.2 4.6" fill="none" stroke="#1a1a1a" stroke-width="1.35"/></svg>
<svg style="left:82.5px;top:271.8px" width="218.0" height="68.2" viewBox="82.5 271.8 218.0 68.2"><rect x="82.5" y="271.8" width="218.0" height="68.2" fill="#ecdede"/><rect x="83.4" y="272.7" width="216.4" height="66.6" fill="#2a0606" stroke="#a01818" stroke-width="1"/><rect x="94.3" y="278.6" width="194.72" height="56.0" fill="#320c0c"/><line x1="94.3" x2="94.3" y1="278.6" y2="334.6" stroke="#b87070" stroke-width="0.55"/><line x1="106.47" x2="106.47" y1="278.6" y2="334.6" stroke="#a05c22" stroke-width="0.55"/><line x1="118.64" x2="118.64" y1="278.6" y2="334.6" stroke="#a05c22" stroke-width="0.55"/><line x1="130.81" x2="130.81" y1="278.6" y2="334.6" stroke="#a05c22" stroke-width="0.55"/><line x1="142.98" x2="142.98" y1="278.6" y2="334.6" stroke="#a05c22" stroke-width="0.55"/><line x1="155.15" x2="155.15" y1="278.6" y2="334.6" stroke="#a05c22" stroke-width="0.55"/><line x1="167.32" x2="167.32" y1="278.6" y2="334.6" stroke="#a05c22" stroke-width="0.55"/><line x1="179.49" x2="179.49" y1="278.6" y2="334.6" stroke="#a05c22" stroke-width="0.55"/><line x1="191.66" x2="191.66" y1="278.6" y2="334.6" stroke="#a05c22" stroke-width="0.55"/><line x1="203.83" x2="203.83" y1="278.6" y2="334.6" stroke="#a05c22" stroke-width="0.55"/><line x1="216.0" x2="216.0" y1="278.6" y2="334.6" stroke="#a05c22" stroke-width="0.55"/><line x1="228.17" x2="228.17" y1="278.6" y2="334.6" stroke="#a05c22" stroke-width="0.55"/><line x1="240.34" x2="240.34" y1="278.6" y2="334.6" stroke="#a05c22" stroke-width="0.55"/><line x1="252.51" x2="252.51" y1="278.6" y2="334.6" stroke="#a05c22" stroke-width="0.55"/><line x1="264.68" x2="264.68" y1="278.6" y2="334.6" stroke="#a05c22" stroke-width="0.55"/><line x1="276.85" x2="276.85" y1="278.6" y2="334.6" stroke="#a05c22" stroke-width="0.55"/><line x1="289.02" x2="289.02" y1="278.6" y2="334.6" stroke="#b87070" stroke-width="0.55"/><line x1="94.3" x2="289.02" y1="278.6" y2="278.6" stroke="#b07030" stroke-width="0.9"/><line x1="94.3" x2="289.02" y1="334.6" y2="334.6" stroke="#b07030" stroke-width="0.9"/><line x1="94.3" x2="289.02" y1="305.8" y2="305.8" stroke="#7a3a14" stroke-width="1.0"/><rect x="94.7" y="305.8" width="12.17" height="1.5" fill="#e8a828"/><rect x="106.87" y="311.8" width="12.17" height="1.5" fill="#e8a828"/><rect x="119.04" y="301.1" width="12.17" height="1.5" fill="#e8a828"/><rect x="131.21" y="324.0" width="12.17" height="1.5" fill="#e8a828"/><rect x="143.38" y="320.7" width="12.17" height="1.5" fill="#e8a828"/><rect x="155.55" y="311.5" width="12.17" height="1.5" fill="#e8a828"/><rect x="167.72" y="319.5" width="12.17" height="1.5" fill="#e8a828"/><rect x="179.89" y="332.6" width="12.17" height="1.5" fill="#e8a828"/><rect x="192.06" y="315.7" width="12.17" height="1.5" fill="#e8a828"/><rect x="204.23" y="318.6" width="12.17" height="1.5" fill="#e8a828"/><rect x="216.4" y="304.0" width="12.17" height="1.5" fill="#e8a828"/><rect x="228.57" y="319.5" width="12.17" height="1.5" fill="#e8a828"/><rect x="240.74" y="302.6" width="12.17" height="1.5" fill="#e8a828"/><rect x="252.91" y="328.8" width="12.17" height="1.5" fill="#e8a828"/><rect x="265.08" y="307.6" width="12.17" height="1.5" fill="#e8a828"/><rect x="277.25" y="307.6" width="12.17" height="1.5" fill="#e8a828"/><text x="119.4" y="278" font-size="5.8" fill="#c09048" font-family="Liberation Sans">1</text><text x="167.2" y="278" font-size="5.8" fill="#c09048" font-family="Liberation Sans">2</text><text x="215.6" y="278" font-size="5.8" fill="#c09048" font-family="Liberation Sans">3</text><text x="264.0" y="278" font-size="5.8" fill="#c09048" font-family="Liberation Sans">4</text><text x="84.1" y="280.4" font-size="7.2" fill="#c89850" font-family="Liberation Serif" textLength="9">128</text><text x="84.7" y="336.4" font-size="7.2" fill="#c89850" font-family="Liberation Serif">0</text></svg>
<div style="left:94.6px;top:337.4px;width:11.9px;height:2.6px;background:#d8c848;"></div>
<svg style="left:383.5px;top:271.8px" width="213.5" height="68.2" viewBox="383.5 271.8 213.5 68.2"><rect x="383.5" y="271.8" width="213.5" height="68.2" fill="#ecdede"/><rect x="384.4" y="272.7" width="211.9" height="66.6" fill="#2a0606" stroke="#a01818" stroke-width="1"/><rect x="396" y="278.6" width="189.8" height="56.0" fill="#320c0c"/><line x1="396.0" x2="396.0" y1="278.6" y2="334.6" stroke="#b87070" stroke-width="0.55"/><line x1="399.01" x2="399.01" y1="278.6" y2="334.6" stroke="#a05c22" stroke-width="0.55"/><line x1="402.03" x2="402.03" y1="278.6" y2="334.6" stroke="#a05c22" stroke-width="0.55"/><line x1="405.04" x2="405.04" y1="278.6" y2="334.6" stroke="#a05c22" stroke-width="0.55"/><line x1="408.05" x2="408.05" y1="278.6" y2="334.6" stroke="#a05c22" stroke-width="0.55"/><line x1="411.06" x2="411.06" y1="278.6" y2="334.6" stroke="#a05c22" stroke-width="0.55"/><line x1="414.08" x2="414.08" y1="278.6" y2="334.6" stroke="#a05c22" stroke-width="0.55"/><line x1="417.09" x2="417.09" y1="278.6" y2="334.6" stroke="#a05c22" stroke-width="0.55"/><line x1="420.1" x2="420.1" y1="278.6" y2="334.6" stroke="#a05c22" stroke-width="0.55"/><line x1="423.11" x2="423.11" y1="278.6" y2="334.6" stroke="#a05c22" stroke-width="0.55"/><line x1="426.13" x2="426.13" y1="278.6" y2="334.6" stroke="#a05c22" stroke-width="0.55"/><line x1="429.14" x2="429.14" y1="278.6" y2="334.6" stroke="#a05c22" stroke-width="0.55"/><line x1="432.15" x2="432.15" y1="278.6" y2="334.6" stroke="#a05c22" stroke-width="0.55"/><line x1="435.17" x2="435.17" y1="278.6" y2="334.6" stroke="#a05c22" stroke-width="0.55"/><line x1="438.18" x2="438.18" y1="278.6" y2="334.6" stroke="#a05c22" stroke-width="0.55"/><line x1="441.19" x2="441.19" y1="278.6" y2="334.6" stroke="#a05c22" stroke-width="0.55"/><line x1="444.2" x2="444.2" y1="278.6" y2="334.6" stroke="#a05c22" stroke-width="0.55"/><line x1="447.22" x2="447.22" y1="278.6" y2="334.6" stroke="#a05c22" stroke-width="0.55"/><line x1="450.23" x2="450.23" y1="278.6" y2="334.6" stroke="#a05c22" stroke-width="0.55"/><line x1="453.24" x2="453.24" y1="278.6" y2="334.6" stroke="#a05c22" stroke-width="0.55"/><line x1="456.25" x2="456.25" y1="278.6" y2="334.6" stroke="#a05c22" stroke-width="0.55"/><line x1="459.27" x2="459.27" y1="278.6" y2="334.6" stroke="#a05c22" stroke-width="0.55"/><line x1="462.28" x2="462.28" y1="278.6" y2="334.6" stroke="#a05c22" stroke-width="0.55"/><line x1="465.29" x2="465.29" y1="278.6" y2="334.6" stroke="#a05c22" stroke-width="0.55"/><line x1="468.3" x2="468.3" y1="278.6" y2="334.6" stroke="#a05c22" stroke-width="0.55"/><line x1="471.32" x2="471.32" y1="278.6" y2="334.6" stroke="#a05c22" stroke-width="0.55"/><line x1="474.33" x2="474.33" y1="278.6" y2="334.6" stroke="#a05c22" stroke-width="0.55"/><line x1="477.34" x2="477.34" y1="278.6" y2="334.6" stroke="#a05c22" stroke-width="0.55"/><line x1="480.36" x2="480.36" y1="278.6" y2="334.6" stroke="#a05c22" stroke-width="0.55"/><line x1="483.37" x2="483.37" y1="278.6" y2="334.6" stroke="#a05c22" stroke-width="0.55"/><line x1="486.38" x2="486.38" y1="278.6" y2="334.6" stroke="#a05c22" stroke-width="0.55"/><line x1="489.39" x2="489.39" y1="278.6" y2="334.6" stroke="#a05c22" stroke-width="0.55"/><line x1="492.41" x2="492.41" y1="278.6" y2="334.6" stroke="#a05c22" stroke-width="0.55"/><line x1="495.42" x2="495.42" y1="278.6" y2="334.6" stroke="#a05c22" stroke-width="0.55"/><line x1="498.43" x2="498.43" y1="278.6" y2="334.6" stroke="#a05c22" stroke-width="0.55"/><line x1="501.44" x2="501.44" y1="278.6" y2="334.6" stroke="#a05c22" stroke-width="0.55"/><line x1="504.46" x2="504.46" y1="278.6" y2="334.6" stroke="#a05c22" stroke-width="0.55"/><line x1="507.47" x2="507.47" y1="278.6" y2="334.6" stroke="#a05c22" stroke-width="0.55"/><line x1="510.48" x2="510.48" y1="278.6" y2="334.6" stroke="#a05c22" stroke-width="0.55"/><line x1="513.5" x2="513.5" y1="278.6" y2="334.6" stroke="#a05c22" stroke-width="0.55"/><line x1="516.51" x2="516.51" y1="278.6" y2="334.6" stroke="#a05c22" stroke-width="0.55"/><line x1="519.52" x2="519.52" y1="278.6" y2="334.6" stroke="#a05c22" stroke-width="0.55"/><line x1="522.53" x2="522.53" y1="278.6" y2="334.6" stroke="#a05c22" stroke-width="0.55"/><line x1="525.55" x2="525.55" y1="278.6" y2="334.6" stroke="#a05c22" stroke-width="0.55"/><line x1="528.56" x2="528.56" y1="278.6" y2="334.6" stroke="#a05c22" stroke-width="0.55"/><line x1="531.57" x2="531.57" y1="278.6" y2="334.6" stroke="#a05c22" stroke-width="0.55"/><line x1="534.58" x2="534.58" y1="278.6" y2="334.6" stroke="#a05c22" stroke-width="0.55"/><line x1="537.6" x2="537.6" y1="278.6" y2="334.6" stroke="#a05c22" stroke-width="0.55"/><line x1="540.61" x2="540.61" y1="278.6" y2="334.6" stroke="#a05c22" stroke-width="0.55"/><line x1="543.62" x2="543.62" y1="278.6" y2="334.6" stroke="#a05c22" stroke-width="0.55"/><line x1="546.63" x2="546.63" y1="278.6" y2="334.6" stroke="#a05c22" stroke-width="0.55"/><line x1="549.65" x2="549.65" y1="278.6" y2="334.6" stroke="#a05c22" stroke-width="0.55"/><line x1="552.66" x2="552.66" y1="278.6" y2="334.6" stroke="#a05c22" stroke-width="0.55"/><line x1="555.67" x2="555.67" y1="278.6" y2="334.6" stroke="#a05c22" stroke-width="0.55"/><line x1="558.69" x2="558.69" y1="278.6" y2="334.6" stroke="#a05c22" stroke-width="0.55"/><line x1="561.7" x2="561.7" y1="278.6" y2="334.6" stroke="#a05c22" stroke-width="0.55"/><line x1="564.71" x2="564.71" y1="278.6" y2="334.6" stroke="#a05c22" stroke-width="0.55"/><line x1="567.72" x2="567.72" y1="278.6" y2="334.6" stroke="#a05c22" stroke-width="0.55"/><line x1="570.74" x2="570.74" y1="278.6" y2="334.6" stroke="#a05c22" stroke-width="0.55"/><line x1="573.75" x2="573.75" y1="278.6" y2="334.6" stroke="#a05c22" stroke-width="0.55"/><line x1="576.76" x2="576.76" y1="278.6" y2="334.6" stroke="#a05c22" stroke-width="0.55"/><line x1="579.77" x2="579.77" y1="278.6" y2="334.6" stroke="#a05c22" stroke-width="0.55"/><line x1="582.79" x2="582.79" y1="278.6" y2="334.6" stroke="#a05c22" stroke-width="0.55"/><line x1="585.8" x2="585.8" y1="278.6" y2="334.6" stroke="#b87070" stroke-width="0.55"/><line x1="396" x2="585.8" y1="278.6" y2="278.6" stroke="#b07030" stroke-width="0.9"/><line x1="396" x2="585.8" y1="334.6" y2="334.6" stroke="#b07030" stroke-width="0.9"/><line x1="396" x2="585.8" y1="305.8" y2="305.8" stroke="#7a3a14" stroke-width="1.0"/><rect x="568.12" y="317.5" width="3.01" height="1.5" fill="#e8a828"/><rect x="571.14" y="317.5" width="3.01" height="1.5" fill="#e8a828"/><rect x="574.15" y="317.5" width="3.01" height="1.5" fill="#e8a828"/><rect x="577.16" y="317.5" width="3.01" height="1.5" fill="#e8a828"/><rect x="580.17" y="317.5" width="3.01" height="1.5" fill="#e8a828"/><rect x="583.19" y="317.5" width="3.01" height="1.5" fill="#e8a828"/><text x="385.1" y="280.4" font-size="7.2" fill="#c89850" font-family="Liberation Serif" textLength="9">128</text><text x="385.7" y="336.4" font-size="7.2" fill="#c89850" font-family="Liberation Serif">0</text></svg>
<span style="left:81.9px;top:265.32px;font-size:5.6px;color:#262626;letter-spacing:0.35px;">Wave</span>
<div style="left:84.4px;top:342.5px;width:37.4px;height:9.2px;box-sizing:border-box;border:1px solid #a6a6a6;border-radius:2.5px;background:linear-gradient(#dcdcdc,#c9c9c9);"></div>
<span style="left:88.4px;top:344.57px;font-size:5.2px;color:#262626;">-|&gt;_|&gt;</span>
<svg style="left:114.0px;top:345.5px" width="5" height="4" viewBox="0 0 5 4"><path d="M0.6 0.9 L2.5 2.8 L4.4 0.9" fill="none" stroke="#1a1a1a" stroke-width="1.3"/></svg>
<span style="left:124.2px;top:344.08px;font-size:6.45px;color:#262626;letter-spacing:-0.1px;"><u>W</u>aveform</span>
<div style="left:155.4px;top:342.5px;width:31.5px;height:9.2px;box-sizing:border-box;border:1px solid #a6a6a6;border-radius:2.5px;background:linear-gradient(#dcdcdc,#c9c9c9);"></div>
<svg style="left:179.1px;top:345.5px" width="5" height="4" viewBox="0 0 5 4"><path d="M0.6 0.9 L2.5 2.8 L4.4 0.9" fill="none" stroke="#1a1a1a" stroke-width="1.3"/></svg>
<svg style="left:159px;top:343.5px" width="12" height="7"><path d="M0.5 6 L3 3.5 L5 1.5 L7 4 L9 5 L11 4.5" fill="none" stroke="#c03a10" stroke-width="1"/></svg>
<span style="left:189.1px;top:344.18px;font-size:6.45px;color:#262626;letter-spacing:-0.1px;"><u>R</u>esolution</span>
<div style="left:219.7px;top:342.6px;width:31.3px;height:9.1px;box-sizing:border-box;border:1px solid #a6a6a6;border-radius:2.5px;background:linear-gradient(#dcdcdc,#c9c9c9);"></div>
<span style="left:223.1px;top:344.31px;font-size:6.0px;color:#262626;">4</span>
<svg style="left:243.2px;top:345.55px" width="5" height="4" viewBox="0 0 5 4"><path d="M0.6 0.9 L2.5 2.8 L4.4 0.9" fill="none" stroke="#1a1a1a" stroke-width="1.3"/></svg>
<span style="left:84px;top:357.18px;font-size:6.45px;color:#262626;letter-spacing:-0.1px;">Re<u>c</u>ord</span>
<div style="left:105.7px;top:353.7px;width:16.9px;height:12.5px;box-sizing:border-box;border:1px solid #a0a0a0;border-radius:3px;background:linear-gradient(#e0e0e0,#cacaca);box-shadow:inset 0 0 0 0.5px #e8e8e8;"></div>
<svg style="left:108.4px;top:356.1px" width="14" height="9"><circle cx="3.4" cy="3.4" r="3.1" fill="#ee1010"/><circle cx="3.4" cy="3.4" r="1.1" fill="#ffd0d0"/><path d="M8.6 5.4 L10.2 7 L11.8 5.4" fill="none" stroke="#111" stroke-width="1.2"/></svg>
<span style="left:124.6px;top:357.58px;font-size:6.45px;color:#262626;letter-spacing:-0.1px;"><u>F</u>requency</span>
<div style="left:155.4px;top:355.1px;width:31.5px;height:9.5px;box-sizing:border-box;border:1px solid #a6a6a6;border-radius:2.5px;background:linear-gradient(#dcdcdc,#c9c9c9);"></div>
<span style="left:158.8px;top:357.01px;font-size:6.0px;color:#9a9a9a;">1/32</span>
<svg style="left:179.1px;top:358.25px" width="5" height="4" viewBox="0 0 5 4"><path d="M0.6 0.9 L2.5 2.8 L4.4 0.9" fill="none" stroke="#9a9a9a" stroke-width="1.3"/></svg>
<span style="left:189.1px;top:357.08px;font-size:6.45px;color:#262626;letter-spacing:-0.1px;"><u>L</u>ength</span>
<div style="left:219.7px;top:354.9px;width:31.3px;height:9.4px;box-sizing:border-box;border:1px solid #a6a6a6;border-radius:2.5px;background:linear-gradient(#dcdcdc,#c9c9c9);"></div>
<span style="left:223.1px;top:356.76px;font-size:6.0px;color:#262626;">4</span>
<svg style="left:243.2px;top:358.0px" width="5" height="4" viewBox="0 0 5 4"><path d="M0.6 0.9 L2.5 2.8 L4.4 0.9" fill="none" stroke="#1a1a1a" stroke-width="1.3"/></svg>
<span style="left:84px;top:375.28px;font-size:6.45px;color:#a0a0a0;letter-spacing:-0.1px;"><u>A</u>mplitude</span>
<div style="left:148.3px;top:375.0px;width:118.4px;height:2.8px;box-sizing:border-box;border:1px solid #acacac;border-radius:1.4px;background:#c2c2c2;"></div>
<svg style="left:146.3px;top:370.8px" width="122.4" height="2"><rect x="7.2" y="0" width="0.6" height="1.5" fill="#808080"/><rect x="13.92" y="0" width="0.6" height="1.5" fill="#808080"/><rect x="20.64" y="0" width="0.6" height="1.5" fill="#808080"/><rect x="27.36" y="0" width="0.6" height="1.5" fill="#808080"/><rect x="34.08" y="0" width="0.6" height="1.5" fill="#808080"/><rect x="40.8" y="0" width="0.6" height="1.5" fill="#808080"/><rect x="47.52" y="0" width="0.6" height="1.5" fill="#808080"/><rect x="54.24" y="0" width="0.6" height="1.5" fill="#808080"/><rect x="60.96" y="0" width="0.6" height="1.5" fill="#808080"/><rect x="67.68" y="0" width="0.6" height="1.5" fill="#808080"/><rect x="74.4" y="0" width="0.6" height="1.5" fill="#808080"/><rect x="81.12" y="0" width="0.6" height="1.5" fill="#808080"/><rect x="87.84" y="0" width="0.6" height="1.5" fill="#808080"/><rect x="94.56" y="0" width="0.6" height="1.5" fill="#808080"/><rect x="101.28" y="0" width="0.6" height="1.5" fill="#808080"/><rect x="108.0" y="0" width="0.6" height="1.5" fill="#808080"/><rect x="114.72" y="0" width="0.6" height="1.5" fill="#808080"/></svg>
<div style="left:163px;top:372.8px;width:12px;height:7.2px;box-sizing:border-box;border:1px solid #a4a4a4;border-radius:2.5px;background:linear-gradient(#e4e4e4,#c6c6c6);"></div>
<svg style="left:167px;top:374.8px" width="4" height="3.2"><path d="M0.5 0V3.2M2 0V3.2M3.5 0V3.2" stroke="#8a8a8a" stroke-width="0.6"/></svg>
<div style="left:272.4px;top:372.9px;width:25.9px;height:9.4px;box-sizing:border-box;border:1px solid #bcbcbc;border-radius:2.5px;background:#d8d8d8;"></div>
<span style="left:274.8px;top:374.76px;font-size:6.0px;color:#a8a8a8;">17</span>
<svg style="left:291.3px;top:374.0px" width="5" height="7.2" viewBox="0 0 5 7.2"><path d="M0.8 2.6 L2.5 0.9 L4.2 2.6 M0.8 4.6 L2.5 6.3 L4.2 4.6" fill="none" stroke="#a0a0a0" stroke-width="1.35"/></svg>
<span style="left:84px;top:391.78px;font-size:6.45px;color:#262626;letter-spacing:-0.1px;"><u>O</u>ffset</span>
<div style="left:148.3px;top:391.6px;width:118.4px;height:2.8px;box-sizing:border-box;border:1px solid #acacac;border-radius:1.4px;background:#c2c2c2;"></div>
<div style="left:148.3px;top:391.6px;width:8.0px;height:2.8px;box-sizing:border-box;border:1px solid #8aa8c8;border-radius:1.4px;background:#9cc4e8;"></div>
<svg style="left:146.3px;top:387.4px" width="122.4" height="2"><rect x="7.2" y="0" width="0.6" height="1.5" fill="#808080"/><rect x="13.92" y="0" width="0.6" height="1.5" fill="#808080"/><rect x="20.64" y="0" width="0.6" height="1.5" fill="#808080"/><rect x="27.36" y="0" width="0.6" height="1.5" fill="#808080"/><rect x="34.08" y="0" width="0.6" height="1.5" fill="#808080"/><rect x="40.8" y="0" width="0.6" height="1.5" fill="#808080"/><rect x="47.52" y="0" width="0.6" height="1.5" fill="#808080"/><rect x="54.24" y="0" width="0.6" height="1.5" fill="#808080"/><rect x="60.96" y="0" width="0.6" height="1.5" fill="#808080"/><rect x="67.68" y="0" width="0.6" height="1.5" fill="#808080"/><rect x="74.4" y="0" width="0.6" height="1.5" fill="#808080"/><rect x="81.12" y="0" width="0.6" height="1.5" fill="#808080"/><rect x="87.84" y="0" width="0.6" height="1.5" fill="#808080"/><rect x="94.56" y="0" width="0.6" height="1.5" fill="#808080"/><rect x="101.28" y="0" width="0.6" height="1.5" fill="#808080"/><rect x="108.0" y="0" width="0.6" height="1.5" fill="#808080"/><rect x="114.72" y="0" width="0.6" height="1.5" fill="#808080"/></svg>
<div style="left:148.3px;top:389.4px;width:12px;height:7.2px;box-sizing:border-box;border:1px solid #a4a4a4;border-radius:2.5px;background:linear-gradient(#e4e4e4,#c6c6c6);"></div>
<svg style="left:152.3px;top:391.4px" width="4" height="3.2"><path d="M0.5 0V3.2M2 0V3.2M3.5 0V3.2" stroke="#8a8a8a" stroke-width="0.6"/></svg>
<div style="left:272.4px;top:389.9px;width:25.9px;height:9.1px;box-sizing:border-box;border:1px solid #bcbcbc;border-radius:2.5px;background:#ffffff;"></div>
<span style="left:274.8px;top:391.61px;font-size:6.0px;color:#2a2a2a;">0</span>
<svg style="left:291.3px;top:390.85px" width="5" height="7.2" viewBox="0 0 5 7.2"><path d="M0.8 2.6 L2.5 0.9 L4.2 2.6 M0.8 4.6 L2.5 6.3 L4.2 4.6" fill="none" stroke="#1a1a1a" stroke-width="1.35"/></svg>
<span style="left:306.6px;top:353.68px;font-size:6.45px;color:#262626;letter-spacing:-0.1px;">Output</span>
<div style="left:306.6px;top:360.5px;width:59.1px;height:44.5px;box-sizing:border-box;border:1px solid #c2c2c2;border-radius:3px;background:#d9d9d9;"></div>
<span style="left:308.9px;top:363.38px;font-size:6.45px;color:#262626;letter-spacing:-0.1px;">M<u>u</u>te</span>
<div style="left:336.3px;top:362.4px;width:8.5px;height:8.5px;box-sizing:border-box;border:1px solid #a2a2a2;border-radius:1.5px;background:linear-gradient(#dcdcdc,#c8c8c8);"></div>
<span style="left:308.9px;top:373.68px;font-size:6.45px;color:#262626;letter-spacing:-0.1px;">MIDI <u>C</u>C#</span>
<div style="left:336.3px;top:372.8px;width:26.5px;height:7.8px;box-sizing:border-box;border:1px solid #bcbcbc;border-radius:2.5px;background:#ffffff;"></div>
<span style="left:338.7px;top:373.86px;font-size:6.0px;color:#2a2a2a;">74</span>
<svg style="left:355.8px;top:373.1px" width="5" height="7.2" viewBox="0 0 5 7.2"><path d="M0.8 2.6 L2.5 0.9 L4.2 2.6 M0.8 4.6 L2.5 6.3 L4.2 4.6" fill="none" stroke="#1a1a1a" stroke-width="1.35"/></svg>
<span style="left:308.9px;top:384.08px;font-size:6.45px;color:#262626;letter-spacing:-0.1px;"><u>P</u>ort</span>
<div style="left:336.3px;top:382.3px;width:27.1px;height:9.1px;box-sizing:border-box;border:1px solid #a6a6a6;border-radius:2.5px;background:linear-gradient(#dcdcdc,#c9c9c9);"></div>
<span style="left:339.7px;top:384.01px;font-size:6.0px;color:#262626;">2</span>
<svg style="left:355.6px;top:385.25px" width="5" height="4" viewBox="0 0 5 4"><path d="M0.6 0.9 L2.5 2.8 L4.4 0.9" fill="none" stroke="#1a1a1a" stroke-width="1.3"/></svg>
<span style="left:308.9px;top:395.28px;font-size:6.45px;color:#262626;letter-spacing:-0.1px;">C<u>h</u>annel</span>
<div style="left:336.3px;top:393.6px;width:27.1px;height:9.5px;box-sizing:border-box;border:1px solid #a6a6a6;border-radius:2.5px;background:linear-gradient(#dcdcdc,#c9c9c9);"></div>
<span style="left:339.7px;top:395.51px;font-size:6.0px;color:#262626;">4</span>
<svg style="left:355.6px;top:396.75px" width="5" height="4" viewBox="0 0 5 4"><path d="M0.6 0.9 L2.5 2.8 L4.4 0.9" fill="none" stroke="#1a1a1a" stroke-width="1.3"/></svg>
<div style="left:376.6px;top:254px;width:0.8px;height:154px;background:#cdcdcd;"></div>
<div style="left:381.2px;top:254px;width:0.8px;height:154px;background:#d0d0d0;"></div>
<span style="left:380.8px;top:357.08px;font-size:6.45px;color:#262626;letter-spacing:-0.1px;">Re<u>c</u>ord</span>
<div style="left:402.6px;top:353.7px;width:17px;height:12.5px;box-sizing:border-box;border:1px solid #a0a0a0;border-radius:3px;background:linear-gradient(#e0e0e0,#cacaca);box-shadow:inset 0 0 0 0.5px #e8e8e8;"></div>
<svg style="left:405.3px;top:356.1px" width="14" height="9"><circle cx="3.4" cy="3.4" r="3.1" fill="#ee1010"/><circle cx="3.4" cy="3.4" r="1.1" fill="#ffd0d0"/><path d="M8.6 5.4 L10.2 7 L11.8 5.4" fill="none" stroke="#111" stroke-width="1.2"/></svg>
<span style="left:421px;top:357.48px;font-size:6.45px;color:#262626;letter-spacing:-0.1px;"><u>F</u>requency</span>
<div style="left:451.9px;top:355.5px;width:32.3px;height:9.5px;box-sizing:border-box;border:1px solid #a6a6a6;border-radius:2.5px;background:linear-gradient(#dcdcdc,#c9c9c9);"></div>
<span style="left:455.3px;top:357.41px;font-size:6.0px;color:#9a9a9a;">1/32</span>
<svg style="left:476.4px;top:358.65px" width="5" height="4" viewBox="0 0 5 4"><path d="M0.6 0.9 L2.5 2.8 L4.4 0.9" fill="none" stroke="#9a9a9a" stroke-width="1.3"/></svg>
<span style="left:485.8px;top:357.48px;font-size:6.45px;color:#262626;letter-spacing:-0.1px;"><u>L</u>ength</span>
<div style="left:516.7px;top:355.5px;width:31px;height:9.5px;box-sizing:border-box;border:1px solid #a6a6a6;border-radius:2.5px;background:linear-gradient(#dcdcdc,#c9c9c9);"></div>
<span style="left:520.1px;top:357.41px;font-size:6.0px;color:#262626;">4</span>
<svg style="left:539.9px;top:358.65px" width="5" height="4" viewBox="0 0 5 4"><path d="M0.6 0.9 L2.5 2.8 L4.4 0.9" fill="none" stroke="#1a1a1a" stroke-width="1.3"/></svg>
<span style="left:380.8px;top:375.08px;font-size:6.45px;color:#a0a0a0;letter-spacing:-0.1px;"><u>A</u>mplitude</span>
<div style="left:445px;top:375.0px;width:117.6px;height:2.8px;box-sizing:border-box;border:1px solid #acacac;border-radius:1.4px;background:#c2c2c2;"></div>
<svg style="left:443px;top:370.8px" width="121.6" height="2"><rect x="8.8" y="0" width="0.6" height="1.5" fill="#808080"/><rect x="15.35" y="0" width="0.6" height="1.5" fill="#808080"/><rect x="21.9" y="0" width="0.6" height="1.5" fill="#808080"/><rect x="28.45" y="0" width="0.6" height="1.5" fill="#808080"/><rect x="35.0" y="0" width="0.6" height="1.5" fill="#808080"/><rect x="41.55" y="0" width="0.6" height="1.5" fill="#808080"/><rect x="48.1" y="0" width="0.6" height="1.5" fill="#808080"/><rect x="54.65" y="0" width="0.6" height="1.5" fill="#808080"/><rect x="61.2" y="0" width="0.6" height="1.5" fill="#808080"/><rect x="67.75" y="0" width="0.6" height="1.5" fill="#808080"/><rect x="74.3" y="0" width="0.6" height="1.5" fill="#808080"/><rect x="80.85" y="0" width="0.6" height="1.5" fill="#808080"/><rect x="87.4" y="0" width="0.6" height="1.5" fill="#808080"/><rect x="93.95" y="0" width="0.6" height="1.5" fill="#808080"/><rect x="100.5" y="0" width="0.6" height="1.5" fill="#808080"/><rect x="107.05" y="0" width="0.6" height="1.5" fill="#808080"/><rect x="113.6" y="0" width="0.6" height="1.5" fill="#808080"/></svg>
<div style="left:498.8px;top:372.8px;width:12px;height:7.2px;box-sizing:border-box;border:1px solid #a4a4a4;border-radius:2.5px;background:linear-gradient(#e4e4e4,#c6c6c6);"></div>
<svg style="left:502.8px;top:374.8px" width="4" height="3.2"><path d="M0.5 0V3.2M2 0V3.2M3.5 0V3.2" stroke="#8a8a8a" stroke-width="0.6"/></svg>
<div style="left:568px;top:372.6px;width:26.2px;height:9.3px;box-sizing:border-box;border:1px solid #bcbcbc;border-radius:2.5px;background:#d8d8d8;"></div>
<span style="left:570.4px;top:374.41px;font-size:6.0px;color:#a8a8a8;">64</span>
<svg style="left:587.2px;top:373.65px" width="5" height="7.2" viewBox="0 0 5 7.2"><path d="M0.8 2.6 L2.5 0.9 L4.2 2.6 M0.8 4.6 L2.5 6.3 L4.2 4.6" fill="none" stroke="#a0a0a0" stroke-width="1.35"/></svg>
<span style="left:380.8px;top:392.08px;font-size:6.45px;color:#262626;letter-spacing:-0.1px;"><u>O</u>ffset</span>
<div style="left:445px;top:391.7px;width:117.6px;height:2.8px;box-sizing:border-box;border:1px solid #acacac;border-radius:1.4px;background:#c2c2c2;"></div>
<div style="left:445px;top:391.7px;width:35px;height:2.8px;box-sizing:border-box;border:1px solid #8aa8c8;border-radius:1.4px;background:#9cc4e8;"></div>
<svg style="left:443px;top:387.5px" width="121.6" height="2"><rect x="8.8" y="0" width="0.6" height="1.5" fill="#808080"/><rect x="15.35" y="0" width="0.6" height="1.5" fill="#808080"/><rect x="21.9" y="0" width="0.6" height="1.5" fill="#808080"/><rect x="28.45" y="0" width="0.6" height="1.5" fill="#808080"/><rect x="35.0" y="0" width="0.6" height="1.5" fill="#808080"/><rect x="41.55" y="0" width="0.6" height="1.5" fill="#808080"/><rect x="48.1" y="0" width="0.6" height="1.5" fill="#808080"/><rect x="54.65" y="0" width="0.6" height="1.5" fill="#808080"/><rect x="61.2" y="0" width="0.6" height="1.5" fill="#808080"/><rect x="67.75" y="0" width="0.6" height="1.5" fill="#808080"/><rect x="74.3" y="0" width="0.6" height="1.5" fill="#808080"/><rect x="80.85" y="0" width="0.6" height="1.5" fill="#808080"/><rect x="87.4" y="0" width="0.6" height="1.5" fill="#808080"/><rect x="93.95" y="0" width="0.6" height="1.5" fill="#808080"/><rect x="100.5" y="0" width="0.6" height="1.5" fill="#808080"/><rect x="107.05" y="0" width="0.6" height="1.5" fill="#808080"/><rect x="113.6" y="0" width="0.6" height="1.5" fill="#808080"/></svg>
<div style="left:472px;top:389.5px;width:12px;height:7.2px;box-sizing:border-box;border:1px solid #a4a4a4;border-radius:2.5px;background:linear-gradient(#e4e4e4,#c6c6c6);"></div>
<svg style="left:476px;top:391.5px" width="4" height="3.2"><path d="M0.5 0V3.2M2 0V3.2M3.5 0V3.2" stroke="#8a8a8a" stroke-width="0.6"/></svg>
<div style="left:568px;top:389.3px;width:26.2px;height:10.1px;box-sizing:border-box;border:1px solid #bcbcbc;border-radius:2.5px;background:#ffffff;"></div>
<span style="left:570.4px;top:391.51px;font-size:6.0px;color:#2a2a2a;">32</span>
<svg style="left:587.2px;top:390.75px" width="5" height="7.2" viewBox="0 0 5 7.2"><path d="M0.8 2.6 L2.5 0.9 L4.2 2.6 M0.8 4.6 L2.5 6.3 L4.2 4.6" fill="none" stroke="#1a1a1a" stroke-width="1.35"/></svg>
<div style="left:611px;top:268.4px;width:12.6px;height:11.8px;box-sizing:border-box;border:1px solid #a0a0a0;border-radius:3px;background:linear-gradient(#e0e0e0,#cacaca);box-shadow:inset 0 0 0 0.5px #e8e8e8;"></div>
<svg style="left:613.5px;top:270.6px" width="8" height="8"><rect x="0" y="0.5" width="7.6" height="3" fill="#c06010"/><rect x="0" y="4.3" width="7.6" height="3" fill="#c06010"/><path d="M1 2h2.5M4 2h2.5M1 5.8h2.5M4 5.8h2.5" stroke="#f0c060" stroke-width="0.6"/></svg>
<div style="left:628.4px;top:268.4px;width:12.3px;height:12px;box-sizing:border-box;border:1px solid #a0a0a0;border-radius:3px;background:linear-gradient(#e0e0e0,#cacaca);box-shadow:inset 0 0 0 0.5px #e8e8e8;"></div>
<svg style="left:630.7px;top:271.6px" width="8" height="7"><rect x="0" y="0" width="7.6" height="6.6" rx="0.8" fill="#111"/><rect x="0.6" y="0.5" width="6.4" height="2.6" fill="#e8f0e8"/><path d="M1 1.2h1M2.6 1.2h1M4.2 1.2h1M5.8 1.2h0.8" stroke="#6a8a6a" stroke-width="0.5"/><rect x="0.6" y="3.8" width="6.4" height="2.4" fill="#12a012"/></svg>
<div style="left:645.4px;top:268.4px;width:12.3px;height:12px;box-sizing:border-box;border:1px solid #a0a0a0;border-radius:3px;background:linear-gradient(#e0e0e0,#cacaca);box-shadow:inset 0 0 0 0.5px #e8e8e8;"></div>
<svg style="left:647.7px;top:271.2px" width="8" height="8"><path d="M0 5 Q3.8 4 7.6 5 V7.2 H0Z" fill="#0a7a0a" stroke="#111" stroke-width="0.5"/><path d="M2 0.6 L5.8 4.8 M5.8 0.6 L2 4.8" stroke="#ee1818" stroke-width="1.3"/></svg>
<span style="left:602.8px;top:288.68px;font-size:6.45px;color:#262626;letter-spacing:-0.1px;">Input</span>
<div style="left:602.3px;top:295.6px;width:59.2px;height:55px;box-sizing:border-box;border:1px solid #c2c2c2;border-radius:3px;background:#d9d9d9;"></div>
<span style="left:604.7px;top:297.88px;font-size:6.45px;color:#262626;letter-spacing:-0.1px;">MIDI <u>C</u>C#</span>
<div style="left:632.6px;top:296.8px;width:26.5px;height:8.3px;box-sizing:border-box;border:1px solid #bcbcbc;border-radius:2.5px;background:#ffffff;"></div>
<span style="left:635.0px;top:298.11px;font-size:6.0px;color:#2a2a2a;">74</span>
<svg style="left:652.1px;top:297.35px" width="5" height="7.2" viewBox="0 0 5 7.2"><path d="M0.8 2.6 L2.5 0.9 L4.2 2.6 M0.8 4.6 L2.5 6.3 L4.2 4.6" fill="none" stroke="#1a1a1a" stroke-width="1.35"/></svg>
<span style="left:604.7px;top:307.88px;font-size:6.45px;color:#262626;letter-spacing:-0.1px;"><u>N</u>ote Off</span>
<div style="left:632.6px;top:306.6px;width:8.5px;height:8.5px;box-sizing:border-box;border:1px solid #a2a2a2;border-radius:1.5px;background:linear-gradient(#dcdcdc,#c8c8c8);"></div>
<span style="left:604.7px;top:318.08px;font-size:6.45px;color:#262626;letter-spacing:-0.1px;"><u>R</u>estart</span>
<div style="left:632.6px;top:316.9px;width:8.5px;height:8.5px;box-sizing:border-box;border:1px solid #a2a2a2;border-radius:1.5px;background:linear-gradient(#dcdcdc,#c8c8c8);"></div>
<span style="left:604.7px;top:328.58px;font-size:6.45px;color:#262626;letter-spacing:-0.1px;"><u>T</u>rigger</span>
<div style="left:632.6px;top:327.6px;width:8.5px;height:8.5px;box-sizing:border-box;border:1px solid #a2a2a2;border-radius:1.5px;background:linear-gradient(#dcdcdc,#c8c8c8);"></div>
<span style="left:604.7px;top:339.48px;font-size:6.45px;color:#262626;letter-spacing:-0.1px;">C<u>h</u>annel</span>
<div style="left:632.4px;top:337.6px;width:27.1px;height:9.5px;box-sizing:border-box;border:1px solid #a6a6a6;border-radius:2.5px;background:linear-gradient(#dcdcdc,#c9c9c9);"></div>
<span style="left:635.8px;top:339.51px;font-size:6.0px;color:#262626;">1</span>
<svg style="left:651.7px;top:340.75px" width="5" height="4" viewBox="0 0 5 4"><path d="M0.6 0.9 L2.5 2.8 L4.4 0.9" fill="none" stroke="#1a1a1a" stroke-width="1.3"/></svg>
<span style="left:602.8px;top:353.58px;font-size:6.45px;color:#262626;letter-spacing:-0.1px;">Output</span>
<div style="left:602.2px;top:360.2px;width:59.4px;height:44.2px;box-sizing:border-box;border:1px solid #c2c2c2;border-radius:3px;background:#d9d9d9;"></div>
<span style="left:604.7px;top:363.68px;font-size:6.45px;color:#262626;letter-spacing:-0.1px;">M<u>u</u>te</span>
<div style="left:632.4px;top:362.6px;width:8.5px;height:8.5px;box-sizing:border-box;border:1px solid #a2a2a2;border-radius:1.5px;background:linear-gradient(#dcdcdc,#c8c8c8);"></div>
<span style="left:604.7px;top:373.68px;font-size:6.45px;color:#262626;letter-spacing:-0.1px;">MIDI <u>C</u>C#</span>
<div style="left:632.4px;top:372.8px;width:26.7px;height:8.1px;box-sizing:border-box;border:1px solid #bcbcbc;border-radius:2.5px;background:#ffffff;"></div>
<span style="left:634.8px;top:374.01px;font-size:6.0px;color:#2a2a2a;">74</span>
<svg style="left:652.1px;top:373.25px" width="5" height="7.2" viewBox="0 0 5 7.2"><path d="M0.8 2.6 L2.5 0.9 L4.2 2.6 M0.8 4.6 L2.5 6.3 L4.2 4.6" fill="none" stroke="#1a1a1a" stroke-width="1.35"/></svg>
<span style="left:604.7px;top:384.18px;font-size:6.45px;color:#262626;letter-spacing:-0.1px;"><u>P</u>ort</span>
<div style="left:632.4px;top:382.3px;width:27.1px;height:9px;box-sizing:border-box;border:1px solid #a6a6a6;border-radius:2.5px;background:linear-gradient(#dcdcdc,#c9c9c9);"></div>
<span style="left:635.8px;top:383.96px;font-size:6.0px;color:#262626;">2</span>
<svg style="left:651.7px;top:385.2px" width="5" height="4" viewBox="0 0 5 4"><path d="M0.6 0.9 L2.5 2.8 L4.4 0.9" fill="none" stroke="#1a1a1a" stroke-width="1.3"/></svg>
<span style="left:604.7px;top:395.48px;font-size:6.45px;color:#262626;letter-spacing:-0.1px;">C<u>h</u>annel</span>
<div style="left:632.4px;top:393.3px;width:27.1px;height:9.5px;box-sizing:border-box;border:1px solid #a6a6a6;border-radius:2.5px;background:linear-gradient(#dcdcdc,#c9c9c9);"></div>
<span style="left:635.8px;top:395.21px;font-size:6.0px;color:#262626;">3</span>
<svg style="left:651.7px;top:396.45px" width="5" height="4" viewBox="0 0 5 4"><path d="M0.6 0.9 L2.5 2.8 L4.4 0.9" fill="none" stroke="#1a1a1a" stroke-width="1.3"/></svg>
<div style="left:289.2px;top:234.2px;width:274.5px;height:124.2px;background:#e6e5e0;box-sizing:border-box;border:1px solid #bdbcb6;border-top-color:#f4f4f0;box-shadow:0 0 1px #888;"></div>
<span style="left:294.3px;top:237.84px;font-size:8.1px;color:#2a2a2a;-webkit-text-stroke:0.2px #2a2a2a;">Global Store</span>
<div style="left:542px;top:237.6px;width:8.7px;height:8.8px;box-sizing:border-box;border:1px solid #c4c3bc;border-radius:50%;background:linear-gradient(#f0f0ec,#dcdbd6);"></div>
<svg style="left:544px;top:239.7px" width="5" height="5"><rect x="0.5" y="1.5" width="3" height="3" fill="none" stroke="#a8a8a0" stroke-width="0.7"/><rect x="1.5" y="0.5" width="3" height="3" fill="none" stroke="#a8a8a0" stroke-width="0.7"/></svg>
<div style="left:552.6px;top:237.6px;width:8.7px;height:8.8px;box-sizing:border-box;border:1px solid #c4c3bc;border-radius:50%;background:linear-gradient(#f0f0ec,#dcdbd6);"></div>
<svg style="left:554.9px;top:239.9px" width="4.2" height="4.2"><path d="M0.4 0.4L3.8 3.8M3.8 0.4L0.4 3.8" stroke="#909088" stroke-width="0.9"/></svg>
<div style="left:294.7px;top:254.3px;width:42.4px;height:11.7px;box-sizing:border-box;border:1px solid #cfcec8;border-radius:3px;background:linear-gradient(#f1f0ec,#e2e1dc);"></div>
<span style="left:296.7px;top:256.55px;font-size:7.7px;color:#2a2a2a;-webkit-text-stroke:0.2px #2a2a2a;">End of</span>
<svg style="left:329.9px;top:258.35px" width="5" height="4" viewBox="0 0 5 4"><path d="M0.6 0.9 L2.5 2.8 L4.4 0.9" fill="none" stroke="#202020" stroke-width="1.3"/></svg>
<div style="left:339.6px;top:254.4px;width:44.9px;height:11.6px;box-sizing:border-box;border:1px solid #cfcec8;border-radius:3px;background:linear-gradient(#f1f0ec,#e2e1dc);"></div>
<span style="left:341.6px;top:256.6px;font-size:7.7px;color:#2a2a2a;-webkit-text-stroke:0.2px #2a2a2a;">Seq:1</span>
<svg style="left:377.3px;top:258.4px" width="5" height="4" viewBox="0 0 5 4"><path d="M0.6 0.9 L2.5 2.8 L4.4 0.9" fill="none" stroke="#202020" stroke-width="1.3"/></svg>
<svg style="left:387.5px;top:254.8px" width="14" height="14" viewBox="0 0 14 14"><path d="M7.42 1.02 A6 6 0 1 0 11.85 10.53 A7.12 7.12 0 0 1 7.42 1.02Z" fill="#e0ae08" stroke="#15151a" stroke-width="1.3" stroke-linejoin="round"/></svg>
<div style="left:294.5px;top:273.4px;width:33.0px;height:16.0px;box-sizing:border-box;border:1px solid #cfcec8;border-radius:3px;background:linear-gradient(#f1f0ec,#e2e1dc);"></div>
<span style="left:299.1px;top:277.6px;font-size:7.7px;color:#2a2a2a;-webkit-text-stroke:0.2px #2a2a2a;">Global</span>
<svg style="left:320.7px;top:284.6px" width="5" height="4" viewBox="0 0 5 4"><path d="M0.6 0.9 L2.5 2.8 L4.4 0.9" fill="none" stroke="#202020" stroke-width="1.3"/></svg>
<div style="left:328.7px;top:273.4px;width:56.5px;height:16.0px;box-sizing:border-box;border:1px solid #cfcec8;border-radius:3px;background:linear-gradient(#f1f0ec,#e2e1dc);"></div>
<span style="left:316.95px;width:80px;text-align:center;top:277.6px;font-size:7.7px;color:#2a2a2a;-webkit-text-stroke:0.2px #2a2a2a;">Seq:1</span>
<svg style="left:378.4px;top:284.6px" width="5" height="4" viewBox="0 0 5 4"><path d="M0.6 0.9 L2.5 2.8 L4.4 0.9" fill="none" stroke="#202020" stroke-width="1.3"/></svg>
<div style="left:386.3px;top:273.4px;width:56.4px;height:16.0px;box-sizing:border-box;border:1px solid #cfcec8;border-radius:3px;background:linear-gradient(#f1f0ec,#e2e1dc);"></div>
<span style="left:374.5px;width:80px;text-align:center;top:277.6px;font-size:7.7px;color:#2a2a2a;-webkit-text-stroke:0.2px #2a2a2a;">Seq:2</span>
<svg style="left:435.9px;top:284.6px" width="5" height="4" viewBox="0 0 5 4"><path d="M0.6 0.9 L2.5 2.8 L4.4 0.9" fill="none" stroke="#202020" stroke-width="1.3"/></svg>
<div style="left:444.4px;top:273.4px;width:56.2px;height:16.0px;box-sizing:border-box;border:1px solid #cfcec8;border-radius:3px;background:linear-gradient(#f1f0ec,#e2e1dc);"></div>
<span style="left:432.5px;width:80px;text-align:center;top:277.6px;font-size:7.7px;color:#2a2a2a;-webkit-text-stroke:0.2px #2a2a2a;">Arp:1</span>
<svg style="left:493.8px;top:284.6px" width="5" height="4" viewBox="0 0 5 4"><path d="M0.6 0.9 L2.5 2.8 L4.4 0.9" fill="none" stroke="#202020" stroke-width="1.3"/></svg>
<div style="left:502.1px;top:273.4px;width:56.6px;height:16.0px;box-sizing:border-box;border:1px solid #cfcec8;border-radius:3px;background:linear-gradient(#f1f0ec,#e2e1dc);"></div>
<span style="left:490.4px;width:80px;text-align:center;top:277.6px;font-size:7.7px;color:#2a2a2a;-webkit-text-stroke:0.2px #2a2a2a;">LFO:Testifitgets</span>
<svg style="left:551.9px;top:284.6px" width="5" height="4" viewBox="0 0 5 4"><path d="M0.6 0.9 L2.5 2.8 L4.4 0.9" fill="none" stroke="#202020" stroke-width="1.3"/></svg>
<div style="left:294.6px;top:290.6px;width:6.4px;height:15.8px;box-sizing:border-box;border:1px solid #cfcec8;border-radius:3px;background:linear-gradient(#f1f0ec,#e2e1dc);"></div>
<svg style="left:295.3px;top:295.7px" width="5.2" height="5.6"><rect x="0" y="0" width="5.2" height="5.6" fill="#111"/><rect x="0.4" y="0.2" width="1.1" height="5.2" fill="#109010"/><rect x="3.8" y="0.2" width="1.1" height="5.2" fill="#109010"/><rect x="1.5" y="0.6" width="2.3" height="2" fill="#f0f0f0"/></svg>
<div style="left:303.1px;top:290.6px;width:24.3px;height:15.8px;box-sizing:border-box;border:1px solid #cfcec8;border-radius:3px;background:linear-gradient(#f1f0ec,#e2e1dc);"></div>
<span style="left:275.2px;width:80px;text-align:center;top:292.55px;font-size:14.5px;color:#111;">1</span>
<div style="left:294.6px;top:307.9px;width:6.4px;height:16.1px;box-sizing:border-box;border:1px solid #98d890;border-radius:3px;background:#ade8a0;"></div>
<svg style="left:295.3px;top:313.15px" width="5.2" height="5.6"><rect x="0" y="0" width="5.2" height="5.6" fill="#111"/><rect x="0.4" y="0.2" width="1.1" height="5.2" fill="#109010"/><rect x="3.8" y="0.2" width="1.1" height="5.2" fill="#109010"/><rect x="1.5" y="0.6" width="2.3" height="2" fill="#f0f0f0"/></svg>
<div style="left:303.1px;top:307.9px;width:24.3px;height:16.1px;box-sizing:border-box;border:1px solid #98d890;border-radius:3px;background:#ade8a0;"></div>
<span style="left:275.2px;width:80px;text-align:center;top:310.0px;font-size:14.5px;color:#111;">2</span>
<div style="left:294.6px;top:325.5px;width:6.4px;height:16.0px;box-sizing:border-box;border:1px solid #cfcec8;border-radius:3px;background:linear-gradient(#f1f0ec,#e2e1dc);"></div>
<svg style="left:295.3px;top:330.7px" width="5.2" height="5.6"><rect x="0" y="0" width="5.2" height="5.6" fill="#111"/><rect x="0.4" y="0.2" width="1.1" height="5.2" fill="#109010"/><rect x="3.8" y="0.2" width="1.1" height="5.2" fill="#109010"/><rect x="1.5" y="0.6" width="2.3" height="2" fill="#f0f0f0"/></svg>
<div style="left:303.1px;top:325.5px;width:24.3px;height:16.0px;box-sizing:border-box;border:1px solid #bebdb6;border-radius:3px;background:linear-gradient(#dad9d4,#cac9c4);"></div>
<span style="left:275.2px;width:80px;text-align:center;top:327.55px;font-size:14.5px;color:#8a8a86;">3</span>
<div style="left:328.7px;top:290.6px;width:56.5px;height:15.8px;box-sizing:border-box;border:1px solid #dcd8a8;border-radius:3px;background:#ebe6b0;"></div>
<span style="left:316.95px;width:80px;text-align:center;top:296.55px;font-size:6.8px;color:#222;">1</span>
<div style="left:328.7px;top:307.9px;width:56.5px;height:16.1px;box-sizing:border-box;border:1px solid #98d890;border-radius:3px;background:#ade8a0;"></div>
<span style="left:316.95px;width:80px;text-align:center;top:313.95px;font-size:6.8px;color:#222;">2</span>
<div style="left:386.3px;top:290.6px;width:56.4px;height:15.8px;box-sizing:border-box;border:1px solid #cfcec8;border-radius:3px;background:linear-gradient(#f1f0ec,#e2e1dc);"></div>
<span style="left:374.5px;width:80px;text-align:center;top:296.55px;font-size:6.8px;color:#222;">1</span>
<div style="left:386.3px;top:307.9px;width:56.4px;height:16.1px;box-sizing:border-box;border:1px solid #98d890;border-radius:3px;background:#ade8a0;"></div>
<span style="left:374.5px;width:80px;text-align:center;top:313.95px;font-size:6.8px;color:#222;">2</span>
<div style="left:444.4px;top:290.6px;width:56.2px;height:15.8px;box-sizing:border-box;border:1px solid #cfcec8;border-radius:3px;background:linear-gradient(#f1f0ec,#e2e1dc);"></div>
<span style="left:432.5px;width:80px;text-align:center;top:296.55px;font-size:6.8px;color:#222;">1</span>
<div style="left:444.4px;top:307.9px;width:56.2px;height:16.1px;box-sizing:border-box;border:1px solid #98d890;border-radius:3px;background:#ade8a0;"></div>
<span style="left:432.5px;width:80px;text-align:center;top:313.95px;font-size:6.8px;color:#222;">2</span>
<div style="left:502.1px;top:290.6px;width:56.6px;height:15.8px;box-sizing:border-box;border:1px solid #cfcec8;border-radius:3px;background:linear-gradient(#f1f0ec,#e2e1dc);"></div>
<span style="left:490.4px;width:80px;text-align:center;top:296.55px;font-size:6.8px;color:#222;">1</span>
<div style="left:502.1px;top:307.9px;width:56.6px;height:16.1px;box-sizing:border-box;border:1px solid #98d890;border-radius:3px;background:#ade8a0;"></div>
<span style="left:490.4px;width:80px;text-align:center;top:313.95px;font-size:6.8px;color:#222;">2</span>
<div style="left:294.7px;top:343.4px;width:32.7px;height:9.6px;box-sizing:border-box;border:1px solid #cfcec8;border-radius:3px;background:linear-gradient(#f1f0ec,#e2e1dc);"></div>
<svg style="left:308.6px;top:346.6px" width="5" height="3.2"><path d="M0.8 2.6 L2.5 0.9 L4.2 2.6" fill="none" stroke="#111" stroke-width="1.2"/></svg>
<div style="left:78.5px;top:24.0px;width:2.4px;height:2.4px;border-radius:50%;background:#f0f0f0;box-shadow:0 0 0.6px #999;"></div>
<div style="left:154.7px;top:24.0px;width:2.4px;height:2.4px;border-radius:50%;background:#f0f0f0;box-shadow:0 0 0.6px #999;"></div>
<svg style="left:86px;top:19px" width="10" height="12.4"><path d="M0.7 0.7 H6.2 L9.3 3.8 V11.7 H0.7Z" fill="#fafafa" stroke="#151515" stroke-width="1.1"/><path d="M6.2 0.7 V3.8 H9.3" fill="#555" stroke="#151515" stroke-width="0.8"/></svg>
<svg style="left:101.5px;top:19px" width="14" height="12.6"><path d="M0.8 3.2 H4.6 L5.6 4.2 H9.6 V11.6 H0.8Z" fill="#dcdcdc" stroke="#111" stroke-width="0.9"/><path d="M0.8 11.8 L4.4 6.6 H13.2 L9.6 11.8Z" fill="#1ec41e" stroke="#0a3a0a" stroke-width="0.7"/><path d="M8.2 3.2 Q10 0.8 12.4 1.6" fill="none" stroke="#222" stroke-width="0.9"/><path d="M11.6 0.4 L13.4 2 L11.2 2.8Z" fill="#111"/></svg>
<svg style="left:119.9px;top:19px" width="13.2" height="12" viewBox="0 0 13.2 12"><path d="M0.5 0.3 H3.2 V5.4 H10 V0.3 H12.7 V11.7 H0.5Z" fill="#111"/><rect x="1" y="0.3" width="1.9" height="10.6" fill="#18a018"/><rect x="10.3" y="0.3" width="1.9" height="10.6" fill="#18a018"/><rect x="3.4" y="0.4" width="6.4" height="4.6" fill="#f2f2f2"/><rect x="3.2" y="5.6" width="6.8" height="5.6" fill="#1a1a1a"/><rect x="7.6" y="7.8" width="1.6" height="2.8" fill="#e8e8e8"/></svg>
<svg style="left:137.4px;top:19px" width="13.2" height="12" viewBox="0 0 13.2 12"><path d="M0.5 0.3 H3.2 V5.4 H10 V0.3 H12.7 V11.7 H0.5Z" fill="#111"/><rect x="1" y="0.3" width="1.9" height="10.6" fill="#18a018"/><rect x="10.3" y="0.3" width="1.9" height="10.6" fill="#18a018"/><rect x="3.4" y="1.2" width="6.4" height="3.6" fill="#c8c8c8"/><rect x="4" y="2.2" width="5" height="0.7" fill="#555"/><rect x="3.2" y="5.6" width="6.8" height="5.6" fill="#1a1a1a"/><rect x="7.6" y="7.8" width="1.6" height="2.8" fill="#e8e8e8"/></svg>
<svg style="left:162.3px;top:19.5px" width="9" height="11"><rect x="0.5" y="0.5" width="8" height="10" fill="#fcfcfc" stroke="#8a96c8" stroke-width="0.8"/><path d="M0.5 0.5V10.5H8.5" fill="none" stroke="#3a4aa8" stroke-width="1"/></svg>
<svg style="left:178.7px;top:20.9px" width="12" height="9"><rect x="0.5" y="0.5" width="11" height="8" fill="#c8d0f0" stroke="#6070c0" stroke-width="1"/><rect x="1.5" y="3" width="9" height="1" fill="#5a6ad0"/><rect x="1.5" y="5.2" width="9" height="1" fill="#5a6ad0"/><rect x="6" y="3" width="1" height="3.2" fill="#fff"/></svg>
<div style="left:195.2px;top:19px;width:0.8px;height:12px;background:#c4c4c4;"></div>
<div style="left:252.8px;top:19px;width:0.8px;height:12px;background:#c4c4c4;"></div>
<svg style="left:200.9px;top:17.9px" width="11.5" height="12.2" viewBox="0 0 11.5 12.2"><path d="M0.3 8.2 H11.2 V11.8 H0.3Z" fill="#0e8a1e"/><path d="M0.3 10.6 H11.2 V11.8 H0.3Z" fill="#111"/><path d="M1.5 9.3 Q3.5 8.6 5 9.6 Q7 10.4 9.8 9.2" fill="none" stroke="#8ad08a" stroke-width="0.7"/><path d="M7.2 1.4 V8.6 M3.6 5 H10.8" stroke="#111" stroke-width="2.8"/><path d="M7.2 1.9 V8.1 M4.1 5 H10.3" stroke="#1ee81e" stroke-width="1.7"/></svg>
<svg style="left:219px;top:17.9px" width="11.5" height="12.2" viewBox="0 0 11.5 12.2"><path d="M0.3 8.2 H11.2 V11.8 H0.3Z" fill="#c87818"/><path d="M0.3 10.6 H11.2 V11.8 H0.3Z" fill="#111"/><path d="M1.5 9.3 Q3.5 8.6 5 9.6 Q7 10.4 9.8 9.2" fill="none" stroke="#703a08" stroke-width="0.7"/><path d="M7.2 1.4 V8.6 M3.6 5 H10.8" stroke="#111" stroke-width="2.8"/><path d="M7.2 1.9 V8.1 M4.1 5 H10.3" stroke="#1ee81e" stroke-width="1.7"/></svg>
<svg style="left:237px;top:17.9px" width="11.5" height="12.2" viewBox="0 0 11.5 12.2"><path d="M0.3 8.2 H11.2 V11.8 H0.3Z" fill="#1450c8"/><path d="M0.3 10.6 H11.2 V11.8 H0.3Z" fill="#111"/><path d="M1.5 9.3 Q3.5 8.6 5 9.6 Q7 10.4 9.8 9.2" fill="none" stroke="#4a8ae8" stroke-width="0.7"/><path d="M7.2 1.4 V8.6 M3.6 5 H10.8" stroke="#111" stroke-width="2.8"/><path d="M7.2 1.9 V8.1 M4.1 5 H10.3" stroke="#1ee81e" stroke-width="1.7"/></svg>
<div style="left:255.8px;top:19.4px;width:28.4px;height:10.5px;box-sizing:border-box;border:1px solid #bcbcbc;border-radius:2.5px;background:#ffffff;"></div>
<span style="left:258.2px;top:21.42px;font-size:7.0px;color:#2a2a2a;"><span style="position:static;letter-spacing:0.6px">120</span></span>
<svg style="left:277.2px;top:21.05px" width="5" height="7.2" viewBox="0 0 5 7.2"><path d="M0.8 2.6 L2.5 0.9 L4.2 2.6 M0.8 4.6 L2.5 6.3 L4.2 4.6" fill="none" stroke="#1a1a1a" stroke-width="1.35"/></svg>
<svg style="left:289.7px;top:20.5px" width="8.6" height="9"><path d="M0.5 0.5 L8.2 4.5 L0.5 8.5Z" fill="#8a8a8a"/></svg>
<svg style="left:306px;top:19px" width="12" height="12"><circle cx="6" cy="6" r="5.4" fill="#9a9a9a" stroke="#777" stroke-width="0.6"/><circle cx="6" cy="6" r="3.4" fill="#aaa" stroke="#707070" stroke-width="0.8"/><path d="M6 3.2V8.8M3.6 6H8.4" stroke="#777" stroke-width="0.7"/></svg>
<div style="left:321.8px;top:16.8px;width:15.8px;height:15.1px;box-sizing:border-box;border:1px solid #9e9e9e;border-radius:2.5px;background:linear-gradient(#b4b4b4,#bebebe);"></div>
<svg style="left:324.5px;top:20px" width="10.5" height="8.5"><path d="M0.5 2H4M0.5 4.3H4M0.5 6.6H4M4 2Q6.5 2 7 4.3Q6.5 6.6 4 6.6M7 4.3H10" fill="none" stroke="#4a4a4a" stroke-width="0.9"/><circle cx="8" cy="4.3" r="1.6" fill="none" stroke="#4a4a4a" stroke-width="0.8"/></svg>
</body></html>
